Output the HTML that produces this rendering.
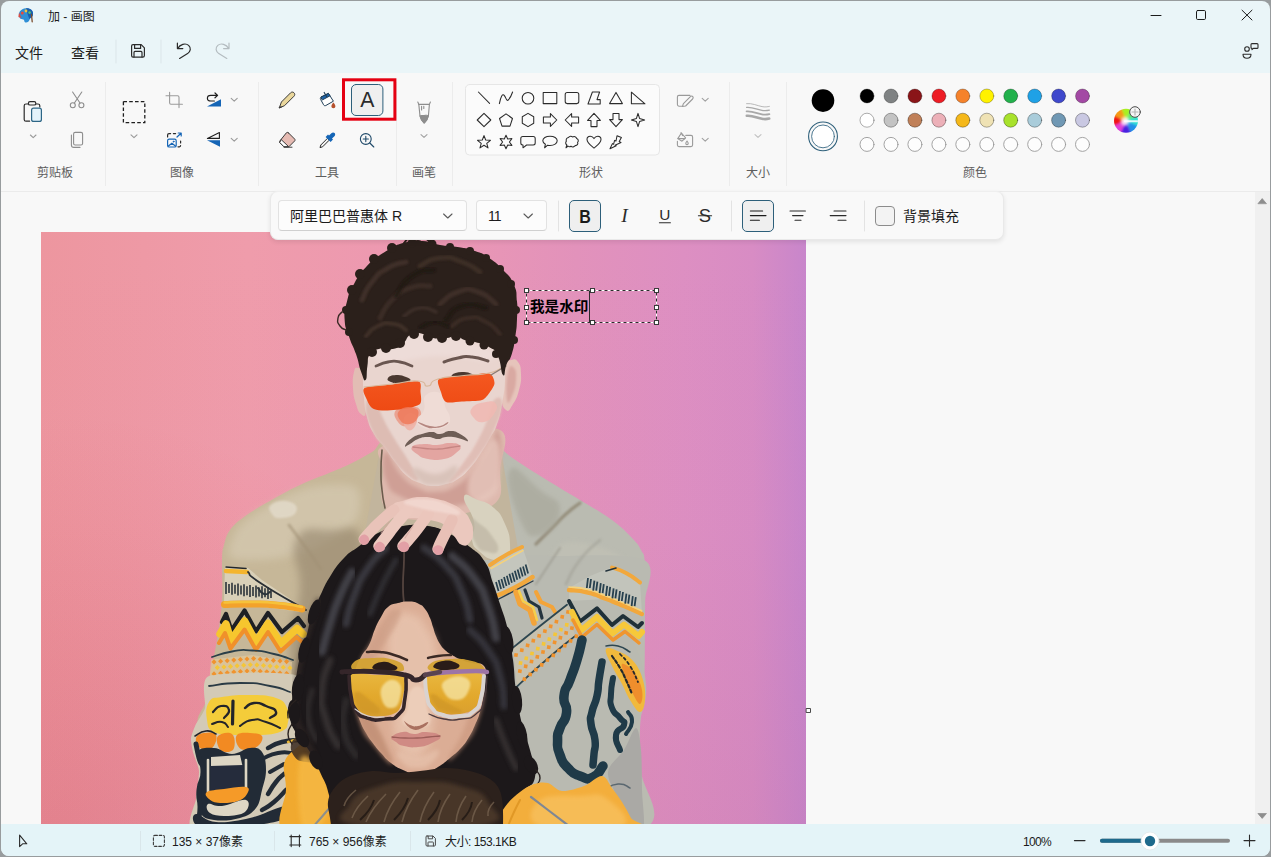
<!DOCTYPE html>
<html lang="zh-CN">
<head>
<meta charset="utf-8">
<title>加 - 画图</title>
<style>
*{box-sizing:border-box;margin:0;padding:0}
html,body{width:1271px;height:857px;overflow:hidden;background:#989c9e}
body{font-family:"Liberation Sans","Noto Sans CJK SC",sans-serif;color:#1b1b1b;position:relative}
.abs{position:absolute}
#win{position:absolute;left:1px;top:1px;width:1269px;height:855px;background:#eaf5f8;border-radius:8px;overflow:hidden}
#topstrip{display:none}
#title{position:absolute;left:48px;top:9px;font-size:12px;color:#1b1b1b;line-height:16px;white-space:nowrap}
.menu{position:absolute;top:44px;font-size:14px;line-height:18px;color:#1b1b1b;white-space:nowrap}
#ribbon{position:absolute;left:1px;top:73px;width:1269px;height:119px;background:#f8f8f8;border-bottom:1px solid #ebebeb}
.sep{position:absolute;top:82px;width:1px;height:104px;background:#ececec}
.glabel{position:absolute;top:165px;font-size:12px;line-height:16px;color:#5d5d5d;white-space:nowrap;transform:translateX(-50%)}
#canvasarea{position:absolute;left:1px;top:192px;width:1269px;height:633px;background:#f8f8f8}
#vscroll{position:absolute;left:1255px;top:192px;width:15px;height:632px;background:#f0f0f0}
#status{position:absolute;left:1px;top:824px;width:1269px;height:32px;background:#e4f4f8;border-radius:0 0 8px 8px}
.st{position:absolute;top:834px;font-size:12px;line-height:16px;color:#1b1b1b;white-space:nowrap}
.stsep{position:absolute;top:831px;width:1px;height:20px;background:#d9e6ea}
svg{position:absolute;overflow:visible}
</style>
</head>
<body>
<div id="win"></div>
<div id="topstrip"></div>

<!-- TITLE BAR -->
<div id="title">加 - 画图</div>


<!-- MENU BAR -->
<div class="menu" style="left:15px">文件</div>
<div class="menu" style="left:71px">查看</div>


<!-- RIBBON -->
<div id="ribbon"></div>
<div class="sep" style="left:105px"></div>
<div class="sep" style="left:258px"></div>
<div class="sep" style="left:396px"></div>
<div class="sep" style="left:452px"></div>
<div class="sep" style="left:729px"></div>
<div class="sep" style="left:786px"></div>
<div class="glabel" style="left:55px">剪贴板</div>
<div class="glabel" style="left:182px">图像</div>
<div class="glabel" style="left:327px">工具</div>
<div class="glabel" style="left:424px">画笔</div>
<div class="glabel" style="left:591px">形状</div>
<div class="glabel" style="left:758px">大小</div>
<div class="glabel" style="left:975px">颜色</div>
<svg id="chromeicons" style="left:0;top:0" width="1271" height="192" viewBox="0 0 1271 192" fill="none" stroke-linecap="round" stroke-linejoin="round">
<!-- app icon (palette) -->
<g>
<path d="M19.5,17.5 C17.5,13 20.5,8.6 26,8.2 C30.5,8 33.6,10.6 33,14.6 C32.6,17.4 30.2,17.6 29.6,19.4 C29,21.4 27.4,22.8 25.4,22.4 C24,22 24.6,19.8 23.4,19.4 C22,19 20.6,19.6 19.5,17.5Z" fill="#2f8fd6" stroke="none"/>
<path d="M26,8.2 C30.5,8 33.6,10.6 33,14.6 C32.6,17.4 30.2,17.6 29.6,19.4 C28,16 27,12 26,8.2Z" fill="#1c5fae" stroke="none"/>
<circle cx="22.3" cy="13" r="1.5" fill="#e9483b" stroke="none"/><circle cx="26" cy="11" r="1.4" fill="#f6c33b" stroke="none"/><circle cx="29.6" cy="12.6" r="1.3" fill="#58c36b" stroke="none"/>
<path d="M19,12.5 L18.4,17 L21.5,18 Z" fill="#e04a3f" stroke="none"/>
<path d="M31.5,14.5 L32.2,21.8" stroke="#7a4a2a" stroke-width="1.3"/>
</g>
<!-- window buttons -->
<path d="M1151,15.5 H1161" stroke="#1b1b1b" stroke-width="1"/>
<rect x="1196.5" y="10.5" width="9" height="9" rx="1.2" stroke="#1b1b1b" stroke-width="1"/>
<path d="M1242,10.2 L1252,20 M1252,10.2 L1242,20" stroke="#1b1b1b" stroke-width="1"/>
<!-- feedback icon -->
<g stroke="#2b2b2b" stroke-width="1.1">
<circle cx="1247" cy="49" r="2.3"/>
<path d="M1243,54.2 H1251 C1251,57 1249.4,58.2 1247,58.2 C1244.6,58.2 1243,57 1243,54.2Z"/>
<path d="M1252,43.6 H1257 C1257.6,43.6 1258,44 1258,44.6 V47.4 C1258,48 1257.6,48.4 1257,48.4 H1253.4 L1252,49.6 V48.4 C1251.2,48.4 1251,48 1251,47.4 V44.6 C1251,44 1251.4,43.6 1252,43.6Z" fill="#eaf5f8"/>
</g>
<!-- menu separators -->
<path d="M116,40 V63 M161,40 V63" stroke="#dbe5e9" stroke-width="1"/>
<!-- save -->
<g stroke="#2b2b2b" stroke-width="1.2">
<path d="M133,44.6 H141.2 L144.4,47.8 V55.6 C144.4,56.6 143.6,57.2 142.8,57.2 H133 C132,57.2 131.6,56.6 131.6,55.6 V46 C131.6,45.2 132,44.6 133,44.6Z"/>
<path d="M134.6,44.8 V48.4 H140.6 V44.8"/>
<path d="M134,57 V52.4 C134,51.8 134.4,51.4 135,51.4 H141 C141.6,51.4 142,51.8 142,52.4 V57"/>
</g>
<!-- undo -->
<path d="M177.4,43.2 V48.6 H182.8 M177.8,48.4 C180,44.4 185.4,42.6 188.6,45.4 C191.4,48 190.6,51.2 187.6,53.6 L179.6,58.4" stroke="#2b2b2b" stroke-width="1.2"/>
<!-- redo (disabled) -->
<path d="M229,43.2 V48.6 H223.6 M228.6,48.4 C226.4,44.4 221,42.6 217.8,45.4 C215,48 215.8,51.2 218.8,53.6 L226.8,58.4" stroke="#b4bcc0" stroke-width="1.2"/>

<!-- ===== CLIPBOARD ===== -->
<g stroke-width="1.2">
<path d="M28.4,104 H26 C24.8,104 24.2,104.6 24.2,105.8 V119.4 C24.2,120.6 24.8,121.2 26,121.2 H29.6" stroke="#2b2b2b"/>
<path d="M35.6,104 H38 C39.2,104 39.8,104.6 39.8,105.8 V107" stroke="#2b2b2b"/>
<rect x="28.4" y="101.6" width="7.4" height="3.4" rx="1.6" stroke="#2b2b2b" fill="#f8f8f8"/>
<rect x="31.6" y="108.2" width="9.8" height="13.2" rx="2" stroke="#2d6686" fill="#e4f3fb"/>
</g>
<path d="M30.4,135 L33.2,137.6 L36,135" stroke="#999999" stroke-width="1.1"/>
<!-- scissors (disabled) -->
<g stroke="#8d8d8d" stroke-width="1.1">
<path d="M72.6,92 L80,103 M81.8,92 L74.4,103"/>
<circle cx="72.8" cy="105.2" r="2.5"/><circle cx="81.4" cy="105.2" r="2.5"/>
</g>
<!-- copy (disabled) -->
<g stroke="#8d8d8d" stroke-width="1.1">
<rect x="73.6" y="132.4" width="9" height="12.6" rx="1.6"/>
<path d="M71.4,135 V145 C71.4,146.6 72.2,147.4 73.8,147.4 H80"/>
</g>

<!-- ===== IMAGE ===== -->
<rect x="123.4" y="101.6" width="21.4" height="21" stroke="#1f1f1f" stroke-width="1.3" stroke-dasharray="3.6 2.2" stroke-linecap="butt" stroke-linejoin="miter"/>
<path d="M131,134.8 L134,137.6 L137,134.8" stroke="#999999" stroke-width="1.1"/>
<!-- crop (gray) -->
<path d="M166,95.8 H177.6 C178.6,95.8 179,96.2 179,97.2 V107.6 M169.6,92.2 V102.8 C169.6,103.8 170,104.2 171,104.2 H182.4" stroke="#9a9a9a" stroke-width="1.1"/>
<!-- rotate -->
<path d="M207,106.6 H221 V99.2 Z" fill="#1565b6" stroke="none"/>
<path d="M214.4,101 H210.8 C208.6,101 207.4,99.8 207.4,98.2 C207.4,96.6 208.6,95.4 210.8,95.4 H217.4 M215,93 L217.6,95.4 L215,97.8" stroke="#1f1f1f" stroke-width="1.2"/>
<path d="M231.2,98.4 L234.2,101.2 L237.2,98.4" stroke="#999999" stroke-width="1.1"/>
<!-- resize -->
<g stroke-width="1.2">
<path d="M167.6,137 V135 C167.6,134 168.2,133.6 169,133.6 H170.6 M173.4,133.6 H175.6 M180.6,141 V143 M180.6,145.6 C180.6,146.4 180.2,146.8 179.4,146.8 H178" stroke="#2b2b2b"/>
<path d="M177,137 L181,133.2 M178.2,133 H181.2 V136" stroke="#1565b6"/>
<rect x="167.6" y="139.2" width="8.6" height="7.8" rx="1.6" stroke="#1565b6"/>
<path d="M168.4,146 L171.9,143.2 L175.4,146" stroke="#1565b6"/>
<circle cx="173.6" cy="141.6" r="0.6" fill="#1565b6" stroke="#1565b6" stroke-width="0.6"/>
</g>
<!-- flip -->
<path d="M207.4,138.4 L219.4,132.6 V138.4 Z" stroke="#1f1f1f" stroke-width="1.1"/>
<path d="M207,140.2 H220 V146.8 Z" fill="#1565b6" stroke="none"/>
<path d="M231.2,138.4 L234.2,141.2 L237.2,138.4" stroke="#999999" stroke-width="1.1"/>

<!-- ===== TOOLS ===== -->
<!-- pencil -->
<g stroke="#3a3a3a" stroke-width="1">
<path d="M279.4,107.6 L281.4,102 L290.6,92.8 C291.6,91.8 293,91.8 294,92.8 C295,93.8 295,95.2 294,96.2 L284.8,105.4 Z" fill="#ead79c"/>
<path d="M279.4,107.6 L281.2,106.9" stroke-width="1.4"/>
</g>
<!-- fill bucket -->
<g stroke-width="1">
<path d="M321.6,96.8 L328.4,93.4 L333.4,101.2 L326,105.4 C325,106 324.2,105.8 323.6,104.8 L320.6,99.4 C320,98.4 320.4,97.4 321.6,96.8Z" fill="#ffffff" stroke="#1f3e57"/>
<path d="M321.2,97 L328.4,93.4 L330,95.8 L322.6,99.8 Z" fill="#1e63a8" stroke="#1f3e57"/>
<path d="M324.2,92.4 L326.6,96.6" stroke="#1f3e57" stroke-width="1.1"/>
<path d="M333.4,102.4 C334.6,104 335.4,105 335.4,106.2 C335.4,107.4 334.6,108.2 333.4,108.2 C332.2,108.2 331.4,107.4 331.4,106.2 C331.4,105 332.2,104 333.4,102.4Z" fill="#b5502c" stroke="none"/>
</g>
<!-- red annotation box + text tool button -->
<rect x="343.5" y="79.8" width="51.4" height="39.4" stroke="#e50012" stroke-width="3" stroke-linejoin="miter"/>
<rect x="351.5" y="84.5" width="31.4" height="31" rx="4.5" fill="#efefef" stroke="#2d5f7a" stroke-width="1"/>
<text x="367.2" y="107.3" font-family="Liberation Sans, sans-serif" font-size="21.2" text-anchor="middle" fill="#2b2b2b" stroke="none">A</text>
<!-- eraser -->
<g stroke="#3a3a3a" stroke-width="1">
<path d="M288.4,132.8 L294.6,139 C295.2,139.6 295.2,140.4 294.6,141 L288.8,146.8 H284 L280,142.8 C279.4,142.2 279.4,141.4 280,140.8 L286.4,132.8 C287,132.2 287.8,132.2 288.4,132.8Z" fill="#e6bbb3"/>
<path d="M281.4,139.8 L288.6,146.6 L284,146.8 L280,142.8 Z" fill="#ffffff"/>
<path d="M284,147.2 H292"/>
</g>
<!-- eyedropper -->
<g>
<path d="M327.2,138.6 L320.8,145 L320,147.6 L322.6,146.8 L329,140.4 Z" fill="#f4f4f4" stroke="#2b2b2b" stroke-width="1"/>
<path d="M325.6,137 L328,134.6 L329,135.6 L331.4,133.2 C332.4,132.2 333.8,132.2 334.6,133 C335.4,133.8 335.4,135.2 334.4,136.2 L332,138.6 L333,139.6 L330.6,142 Z" fill="#1565b6" stroke="none"/>
</g>
<!-- magnifier -->
<g stroke="#1d4868" stroke-width="1.1">
<circle cx="365.8" cy="139" r="5.4"/>
<path d="M369.8,143 L373.8,147 M363.2,139 H368.4 M365.8,136.4 V141.6"/>
</g>
<!-- ===== BRUSH ===== -->
<g stroke="#8d8d8d" stroke-width="1.1">
<path d="M417.8,102 L418.8,104.4 H429.4 L430.4,102"/>
<path d="M418.8,104.4 L420,116 C420.6,119 422.4,121.4 424.2,123 C426,121.4 427.8,119 428.4,116 L429.4,104.4"/>
<path d="M420,116 C421.4,115 422.6,116 424.2,115.4 C425.8,114.8 427,115.6 428.4,115.4 C427.8,119 426,121.4 424.2,123 C422.4,121.4 420.6,119 420,116Z" fill="#8d8d8d"/>
<path d="M421.6,106.4 V110 M423.8,106.4 V108.4"/>
</g>
<path d="M421,134.6 L424,137.4 L427,134.6" stroke="#a0a0a0" stroke-width="1.1"/>
<rect x="465.5" y="84.5" width="194" height="70.5" rx="4" fill="#fbfbfb" stroke="#e6e6e6" stroke-width="1"/>
<g transform="translate(484,98)" stroke="#2b2b2b" stroke-width="1.05"><path d="M-5.6,-6 L5.6,5.4"/></g>
<g transform="translate(506,98)" stroke="#2b2b2b" stroke-width="1.05"><path d="M-6.6,5.6 C-5.4,-1 -3.6,-5 -1.6,-2.4 C0.2,0 0.6,4 2.6,1.6 C4.6,-0.8 5.8,-3.6 6.6,-6"/></g>
<g transform="translate(528,98)" stroke="#2b2b2b" stroke-width="1.05"><circle cx="0" cy="0.2" r="5.8"/></g>
<g transform="translate(550,98)" stroke="#2b2b2b" stroke-width="1.05"><rect x="-6.8" y="-5.6" width="13.6" height="11.2"/></g>
<g transform="translate(572,98)" stroke="#2b2b2b" stroke-width="1.05"><rect x="-6.8" y="-5.6" width="13.6" height="11.2" rx="2"/></g>
<g transform="translate(594,98)" stroke="#2b2b2b" stroke-width="1.05"><path d="M-6,6 L-1.6,-6 H5.6 L3,1.6 H6.2 V6 Z"/></g>
<g transform="translate(616,98)" stroke="#2b2b2b" stroke-width="1.05"><path d="M0,-5.6 L6.4,5.6 H-6.4 Z"/></g>
<g transform="translate(638,98)" stroke="#2b2b2b" stroke-width="1.05"><path d="M-6.6,-5.8 V5.8 H7 Z"/></g>
<g transform="translate(484,120)" stroke="#2b2b2b" stroke-width="1.05"><path d="M0,-6.6 L6.8,0 L0,6.6 L-6.8,0 Z"/></g>
<g transform="translate(506,120)" stroke="#2b2b2b" stroke-width="1.05"><polygon points="0.00,-6.80 6.47,-2.10 4.00,5.50 -4.00,5.50 -6.47,-2.10" transform="translate(0,0.6)"/></g>
<g transform="translate(528,120)" stroke="#2b2b2b" stroke-width="1.05"><polygon points="0.00,-6.60 5.72,-3.30 5.72,3.30 0.00,6.60 -5.72,3.30 -5.72,-3.30"/></g>
<g transform="translate(550,120)" stroke="#2b2b2b" stroke-width="1.05"><path d="M-6.6,-3 H0.4 V-6.4 L6.8,0 L0.4,6.4 V3 H-6.6 Z"/></g>
<g transform="translate(572,120)" stroke="#2b2b2b" stroke-width="1.05"><path d="M6.6,-3 H-0.4 V-6.4 L-6.8,0 L-0.4,6.4 V3 H6.6 Z"/></g>
<g transform="translate(594,120)" stroke="#2b2b2b" stroke-width="1.05"><path d="M-3,6.6 V0.4 H-6.4 L0,-6.6 L6.4,0.4 H3 V6.6 Z"/></g>
<g transform="translate(616,120)" stroke="#2b2b2b" stroke-width="1.05"><path d="M-3,-6.6 V-0.4 H-6.4 L0,6.6 L6.4,-0.4 H3 V-6.6 Z"/></g>
<g transform="translate(638,120)" stroke="#2b2b2b" stroke-width="1.05"><polygon points="0.00,-6.60 1.56,-1.56 6.60,0.00 1.56,1.56 0.00,6.60 -1.56,1.56 -6.60,0.00 -1.56,-1.56"/></g>
<g transform="translate(484,142)" stroke="#2b2b2b" stroke-width="1.05"><polygon points="0.00,-6.80 1.70,-2.35 6.47,-2.10 2.76,0.90 4.00,5.50 0.00,2.90 -4.00,5.50 -2.76,0.90 -6.47,-2.10 -1.70,-2.35" transform="translate(0,0.4)"/></g>
<g transform="translate(506,142)" stroke="#2b2b2b" stroke-width="1.05"><polygon points="0.00,-6.80 1.70,-2.94 5.89,-3.40 3.40,0.00 5.89,3.40 1.70,2.94 0.00,6.80 -1.70,2.94 -5.89,3.40 -3.40,0.00 -5.89,-3.40 -1.70,-2.94"/></g>
<g transform="translate(528,142)" stroke="#2b2b2b" stroke-width="1.05"><path d="M-5.2,-5.6 H5.2 C6.6,-5.6 7.2,-4.8 7.2,-3.6 V1 C7.2,2.2 6.6,3 5.2,3 H-1.4 L-5,5.8 V3 H-5.2 C-6.6,3 -7.2,2.2 -7.2,1 V-3.6 C-7.2,-4.8 -6.6,-5.6 -5.2,-5.6Z"/></g>
<g transform="translate(550,142)" stroke="#2b2b2b" stroke-width="1.05"><path d="M0,-5.8 C4.2,-5.8 7.2,-3.8 7.2,-1.2 C7.2,1.4 4.2,3.4 0,3.4 C-0.8,3.4 -1.6,3.3 -2.4,3.2 L-5.4,5.8 L-4.6,2.2 C-6.2,1.4 -7.2,0.2 -7.2,-1.2 C-7.2,-3.8 -4.2,-5.8 0,-5.8Z"/></g>
<g transform="translate(572,142)" stroke="#2b2b2b" stroke-width="1.05"><path d="M-3.4,-4.6 C-2.4,-6 -0.4,-6 0.6,-5 C2,-6 4.2,-5.4 4.6,-3.6 C6.4,-3 6.8,-0.8 5.6,0.4 C6.4,2 5,3.8 3.2,3.6 C2.4,5 0.2,5.4 -1,4.2 C-2,4.8 -3.2,4.8 -4,4 L-6,5.8 L-5.2,3 C-6.6,2 -6.6,0.2 -5.6,-0.8 C-6.4,-2.4 -5.2,-4.4 -3.4,-4.6Z"/></g>
<g transform="translate(594,142)" stroke="#2b2b2b" stroke-width="1.05"><path d="M0,6 C-3,3.6 -7,0.8 -7,-2.6 C-7,-4.6 -5.6,-5.8 -3.8,-5.8 C-2.2,-5.8 -0.8,-4.8 0,-3.4 C0.8,-4.8 2.2,-5.8 3.8,-5.8 C5.6,-5.8 7,-4.6 7,-2.6 C7,0.8 3,3.6 0,6Z"/></g>
<g transform="translate(616,142)" stroke="#2b2b2b" stroke-width="1.05"><path d="M1,-6.2 L5.4,-4.4 L3.2,-0.4 L5,0.4 L-1,3.2 L0.2,3.8 L-6,6.8 L-3.6,1.6 L-2.4,2.2 L-1.4,-1.6 L0,-1 Z"/></g>
<g stroke="#9a9a9a" stroke-width="1.1"><path d="M690,95.4 H679 C678,95.4 677.4,96 677.4,97 V104.6 C677.4,105.6 678,106.2 679,106.2 H682"/><path d="M682.4,106.4 L683.4,103.6 L690.4,96.6 C691.2,95.8 692.2,95.8 692.8,96.6 C693.4,97.4 693.4,98.2 692.6,99 L685.6,106 Z"/></g>
<path d="M702.2,98.4 L705.2,101.2 L708.2,98.4" stroke="#a0a0a0" stroke-width="1.1"/>
<g stroke="#9a9a9a" stroke-width="1.1"><path d="M685.8,135.4 H691 C692,135.4 692.6,136 692.6,137 V145 C692.6,146 692,146.6 691,146.6 H679 C678,146.6 677.4,146 677.4,145 V141.4"/><path d="M681.4,133 L685.6,137.8 L682,141.2 L677.8,138.6 Z"/><path d="M678,138.6 H685"/><path d="M681,132.8 L682.6,135.6"/><path d="M687,141 C687.8,142 688.2,142.6 688.2,143.4 C688.2,144.2 687.6,144.6 687,144.6 C686.4,144.6 685.8,144.2 685.8,143.4 C685.8,142.6 686.2,142 687,141Z"/></g>
<path d="M702.2,138.4 L705.2,141.2 L708.2,138.4" stroke="#a0a0a0" stroke-width="1.1"/>
<g stroke="#a8a8a8"><path d="M746.6,103.6 C752,103 757,105.6 762,106.6 C765,107.2 767.6,106.8 769.4,106.4" stroke-width="0.8"/><path d="M746.6,107.4 C752,106.8 757,109.4 762,110.4 C765,111 767.6,110.6 769.4,110.2" stroke-width="1.2"/><path d="M746.6,111.4 C752,110.8 757,113.4 762,114.4 C765,115 767.6,114.6 769.4,114.2" stroke-width="1.8"/><path d="M746.8,115.8 C752,115.2 757,117.8 762,118.8 C765,119.4 767.6,119 769.2,118.6" stroke-width="2.6"/></g>
<path d="M755,134.6 L758,137.4 L761,134.6" stroke="#c0c0c0" stroke-width="1.1"/>
<circle cx="823" cy="100.6" r="11.3" fill="#000000" stroke="none"/>
<circle cx="823" cy="136.4" r="14.4" fill="#f8f8f8" stroke="#2d5f7a" stroke-width="1.1"/>
<circle cx="823" cy="136.4" r="11.4" fill="#ffffff" stroke="#3a6a84" stroke-width="0.9"/>
<circle cx="867.0" cy="96" r="7" fill="#000000" stroke="#00000055" stroke-width="0.8"/>
<circle cx="891.0" cy="96" r="7" fill="#7f8283" stroke="#00000055" stroke-width="0.8"/>
<circle cx="914.9" cy="96" r="7" fill="#8a1518" stroke="#00000055" stroke-width="0.8"/>
<circle cx="938.9" cy="96" r="7" fill="#ed1c24" stroke="#00000055" stroke-width="0.8"/>
<circle cx="962.8" cy="96" r="7" fill="#f5822b" stroke="#00000055" stroke-width="0.8"/>
<circle cx="986.8" cy="96" r="7" fill="#fff200" stroke="#00000055" stroke-width="0.8"/>
<circle cx="1010.7" cy="96" r="7" fill="#22b14c" stroke="#00000055" stroke-width="0.8"/>
<circle cx="1034.7" cy="96" r="7" fill="#1fa1e6" stroke="#00000055" stroke-width="0.8"/>
<circle cx="1058.6" cy="96" r="7" fill="#3f48cc" stroke="#00000055" stroke-width="0.8"/>
<circle cx="1082.5" cy="96" r="7" fill="#a349a4" stroke="#00000055" stroke-width="0.8"/>
<circle cx="867.0" cy="120.2" r="7" fill="#ffffff" stroke="#00000066" stroke-width="0.8"/>
<circle cx="891.0" cy="120.2" r="7" fill="#c3c3c3" stroke="#00000066" stroke-width="0.8"/>
<circle cx="914.9" cy="120.2" r="7" fill="#c08058" stroke="#00000066" stroke-width="0.8"/>
<circle cx="938.9" cy="120.2" r="7" fill="#ecb0b8" stroke="#00000066" stroke-width="0.8"/>
<circle cx="962.8" cy="120.2" r="7" fill="#f5b81a" stroke="#00000066" stroke-width="0.8"/>
<circle cx="986.8" cy="120.2" r="7" fill="#efe2b4" stroke="#00000066" stroke-width="0.8"/>
<circle cx="1010.7" cy="120.2" r="7" fill="#a8e22c" stroke="#00000066" stroke-width="0.8"/>
<circle cx="1034.7" cy="120.2" r="7" fill="#a9ccda" stroke="#00000066" stroke-width="0.8"/>
<circle cx="1058.6" cy="120.2" r="7" fill="#7098b4" stroke="#00000066" stroke-width="0.8"/>
<circle cx="1082.5" cy="120.2" r="7" fill="#c9c8e2" stroke="#00000066" stroke-width="0.8"/>
<circle cx="867.0" cy="144.4" r="7" fill="#fdfdfd" stroke="#9a9a9a" stroke-width="0.9"/>
<circle cx="891.0" cy="144.4" r="7" fill="#fdfdfd" stroke="#9a9a9a" stroke-width="0.9"/>
<circle cx="914.9" cy="144.4" r="7" fill="#fdfdfd" stroke="#9a9a9a" stroke-width="0.9"/>
<circle cx="938.9" cy="144.4" r="7" fill="#fdfdfd" stroke="#9a9a9a" stroke-width="0.9"/>
<circle cx="962.8" cy="144.4" r="7" fill="#fdfdfd" stroke="#9a9a9a" stroke-width="0.9"/>
<circle cx="986.8" cy="144.4" r="7" fill="#fdfdfd" stroke="#9a9a9a" stroke-width="0.9"/>
<circle cx="1010.7" cy="144.4" r="7" fill="#fdfdfd" stroke="#9a9a9a" stroke-width="0.9"/>
<circle cx="1034.7" cy="144.4" r="7" fill="#fdfdfd" stroke="#9a9a9a" stroke-width="0.9"/>
<circle cx="1058.6" cy="144.4" r="7" fill="#fdfdfd" stroke="#9a9a9a" stroke-width="0.9"/>
<circle cx="1082.5" cy="144.4" r="7" fill="#fdfdfd" stroke="#9a9a9a" stroke-width="0.9"/>
<defs><filter id="wb" x="-50%" y="-50%" width="200%" height="200%"><feGaussianBlur stdDeviation="1.1"/></filter><filter id="wb2" x="-50%" y="-50%" width="200%" height="200%"><feGaussianBlur stdDeviation="1.8"/></filter><clipPath id="wclip"><circle cx="1126" cy="120.8" r="12"/></clipPath></defs>
<g clip-path="url(#wclip)"><g filter="url(#wb)">
<path d="M1126,120.8 L1119.67,105.13 L1133.14,105.48 Z" fill="#a8f020" stroke="none"/>
<path d="M1126,120.8 L1132.60,105.24 L1141.88,115.02 Z" fill="#58e870" stroke="none"/>
<path d="M1126,120.8 L1141.67,114.47 L1141.32,127.94 Z" fill="#30e2d2" stroke="none"/>
<path d="M1126,120.8 L1141.56,127.40 L1131.78,136.68 Z" fill="#2090e8" stroke="none"/>
<path d="M1126,120.8 L1132.33,136.47 L1118.86,136.12 Z" fill="#4a22e0" stroke="none"/>
<path d="M1126,120.8 L1119.40,136.36 L1110.12,126.58 Z" fill="#e040d8" stroke="none"/>
<path d="M1126,120.8 L1110.33,127.13 L1110.68,113.66 Z" fill="#f01818" stroke="none"/>
<path d="M1126,120.8 L1110.44,114.20 L1120.22,104.92 Z" fill="#f49a14" stroke="none"/>
</g>
<circle cx="1125" cy="121.3" r="4.2" fill="#ffffff" fill-opacity="0.85" stroke="none" filter="url(#wb2)"/>
<rect x="1124" y="120.3" width="15" height="2" rx="1" fill="#ffffff" fill-opacity="0.85" stroke="none"/>
</g>
<circle cx="1135" cy="112" r="5.3" fill="#f6f6f6" stroke="#4a4a4a" stroke-width="1"/>
<path d="M1132,112 H1138 M1135,109 V115" stroke="#b4b4b4" stroke-width="1.2"/>

</svg>


<!-- CANVAS AREA -->
<div id="canvasarea"></div>
<div id="vscroll"></div>
<svg id="photo" style="left:41px;top:232px" width="765" height="592" viewBox="41 232 765 592">
<defs>
<clipPath id="pclip"><rect x="41" y="232" width="765" height="592"/></clipPath>
<linearGradient id="bgx" gradientUnits="userSpaceOnUse" x1="41" y1="0" x2="806" y2="0">
<stop offset="0" stop-color="#ed969f"/><stop offset="0.27" stop-color="#ef9cab"/><stop offset="0.5" stop-color="#ec98b2"/>
<stop offset="0.7" stop-color="#e292bb"/><stop offset="0.84" stop-color="#dd8fc2"/><stop offset="0.93" stop-color="#d88cc4"/><stop offset="1" stop-color="#c886cb"/>
</linearGradient>
<linearGradient id="bgy" gradientUnits="userSpaceOnUse" x1="0" y1="232" x2="0" y2="824">
<stop offset="0" stop-color="#b46493" stop-opacity="0"/><stop offset="0.5" stop-color="#b46493" stop-opacity="0.02"/>
<stop offset="1" stop-color="#b46493" stop-opacity="0.14"/>
</linearGradient>
<radialGradient id="bgbl" gradientUnits="userSpaceOnUse" cx="60" cy="830" r="420">
<stop offset="0" stop-color="#d8302a" stop-opacity="0.14"/><stop offset="0.6" stop-color="#d8302a" stop-opacity="0.06"/><stop offset="1" stop-color="#d8302a" stop-opacity="0"/>
</radialGradient>
<linearGradient id="armL" gradientUnits="userSpaceOnUse" x1="200" y1="0" x2="340" y2="0">
<stop offset="0" stop-color="#cdbfa5"/><stop offset="0.5" stop-color="#c6b79c"/><stop offset="1" stop-color="#a9987e"/>
</linearGradient>
<linearGradient id="lensM" gradientUnits="userSpaceOnUse" x1="0" y1="376" x2="0" y2="410">
<stop offset="0" stop-color="#f4571f"/><stop offset="1" stop-color="#ee4a14"/>
</linearGradient>
<linearGradient id="lensG" gradientUnits="userSpaceOnUse" x1="0" y1="676" x2="0" y2="718">
<stop offset="0" stop-color="#e8b53c"/><stop offset="0.5" stop-color="#e2a82c"/><stop offset="1" stop-color="#d89e30"/>
</linearGradient>
<filter id="b1" x="-10%" y="-10%" width="120%" height="120%"><feGaussianBlur stdDeviation="1"/></filter>
<filter id="b2" x="-10%" y="-10%" width="120%" height="120%"><feGaussianBlur stdDeviation="2.2"/></filter>
<filter id="b4" x="-20%" y="-20%" width="140%" height="140%"><feGaussianBlur stdDeviation="4"/></filter>
<filter id="b8" x="-30%" y="-30%" width="160%" height="160%"><feGaussianBlur stdDeviation="8"/></filter>
</defs>
<g clip-path="url(#pclip)">
<rect x="41" y="232" width="765" height="592" fill="url(#bgx)"/>
<rect x="41" y="232" width="765" height="592" fill="url(#bgy)"/>
<rect x="41" y="232" width="765" height="592" fill="url(#bgbl)"/>
<path d="M384.0,443.0 C378.4,439.4 378.4,448.0 372.0,452.0 C365.6,456.0 359.6,459.2 352.0,463.0 C344.4,466.8 344.4,466.6 334.0,471.0 C323.6,475.4 313.2,478.8 300.0,485.0 C286.8,491.2 279.2,495.6 268.0,502.0 C256.8,508.4 251.6,511.4 244.0,517.0 C236.4,522.6 234.0,524.4 230.0,530.0 C226.0,535.6 225.6,539.0 224.0,545.0 C222.4,551.0 222.4,549.0 222.0,560.0 C221.6,571.0 223.0,584.0 222.0,600.0 C221.0,616.0 219.6,624.0 217.0,640.0 C214.4,656.0 211.2,668.0 209.0,680.0 C206.8,692.0 206.6,690.0 206.0,700.0 C205.4,710.0 187.2,722.0 206.0,730.0 C224.8,738.0 273.2,742.8 300.0,740.0 C326.8,737.2 331.0,744.0 340.0,716.0 C349.0,688.0 333.0,635.2 345.0,600.0 C357.0,564.8 389.0,566.0 400.0,540.0 C411.0,514.0 403.2,489.4 400.0,470.0 C396.8,450.6 389.6,446.6 384.0,443.0Z" fill="#c6b798" />
<path d="M497.0,443.0 C508.0,439.4 500.4,448.0 505.0,452.0 C509.6,456.0 511.0,457.0 520.0,463.0 C529.0,469.0 538.0,474.6 550.0,482.0 C562.0,489.4 567.6,492.4 580.0,500.0 C592.4,507.6 601.6,512.4 612.0,520.0 C622.4,527.6 626.2,532.0 632.0,538.0 C637.8,544.0 638.4,544.6 641.0,550.0 C643.6,555.4 644.2,551.0 645.0,565.0 C645.8,579.0 645.2,595.0 645.0,620.0 C644.8,645.0 645.0,668.0 644.0,690.0 C643.0,712.0 640.6,714.0 640.0,730.0 C639.4,746.0 640.6,750.0 641.0,770.0 C641.4,790.0 670.2,818.0 642.0,830.0 C613.8,842.0 530.4,872.0 500.0,830.0 C469.6,788.0 500.0,674.0 490.0,620.0 C480.0,566.0 458.0,590.0 450.0,560.0 C442.0,530.0 440.6,493.4 450.0,470.0 C459.4,446.6 486.0,446.6 497.0,443.0Z" fill="#babbb1" />
<path d="M536.0,544.0 C541.3,538.7 542.0,538.0 552.0,528.0 C562.0,518.0 556.7,522.3 566.0,514.0 C575.3,505.7 575.3,506.7 580.0,503.0" fill="none" stroke="#8d8470" stroke-width="3.2" stroke-linecap="round" stroke-linejoin="round" opacity="0.8" filter="url(#b1)"/>
<path d="M510.0,470.0 C515.3,462.0 526.7,479.3 540.0,490.0 C553.3,500.7 560.0,498.0 560.0,510.0 C560.0,522.0 550.7,532.3 540.0,535.0 C529.3,537.7 528.0,537.3 520.0,520.0 C512.0,502.7 504.7,478.0 510.0,470.0Z" fill="#a6a598" opacity="0.6" filter="url(#b2)"/>
<path d="M560.0,545.0 C572.0,537.0 605.6,547.0 620.0,556.0 C634.4,565.0 644.0,582.0 632.0,590.0 C620.0,598.0 574.4,605.0 560.0,596.0 C545.6,587.0 548.0,553.0 560.0,545.0Z" fill="#c3c2b6" opacity="0.6" filter="url(#b2)"/>
<path d="M380.0,450.0 L500.0,445.0 L520.0,560.0 L360.0,560.0Z" fill="#c2b59d" />
<path d="M270.0,505.0 C296.1,490.3 306.0,486.3 330.0,485.0 C354.0,483.7 360.0,485.3 360.0,500.0 C360.0,514.7 359.3,524.0 330.0,540.0 C300.7,556.0 276.1,560.0 250.0,560.0 C223.9,560.0 226.7,554.7 232.0,540.0 C237.3,525.3 243.9,519.7 270.0,505.0Z" fill="#d6cab2" opacity="0.7" filter="url(#b4)"/>
<path d="M296.0,540.0 C304.0,524.0 312.4,530.0 330.0,530.0 C347.6,530.0 356.7,521.3 362.0,540.0 C367.3,558.7 358.5,568.0 350.0,600.0 C341.5,632.0 343.3,633.3 330.0,660.0 C316.7,686.7 310.7,705.3 300.0,700.0 C289.3,694.7 290.0,669.3 290.0,640.0 C290.0,610.7 298.4,616.7 300.0,590.0 C301.6,563.3 288.0,556.0 296.0,540.0Z" fill="#93836a" opacity="0.6" filter="url(#b4)"/>
<path d="M289.0,525.0 C294.0,531.7 293.3,530.3 304.0,545.0 C314.7,559.7 315.3,561.0 321.0,569.0" fill="none" stroke="#a19176" stroke-width="3" stroke-linecap="round" stroke-linejoin="round" opacity="0.6" filter="url(#b1)"/>
<path d="M272.0,504.0 C276.8,500.8 283.6,499.9 290.0,502.0 C296.4,504.1 298.1,507.7 296.0,512.0 C293.9,516.3 288.4,517.5 282.0,518.0 C275.6,518.5 274.7,517.7 272.0,514.0 C269.3,510.3 267.2,507.2 272.0,504.0Z" fill="#e6dfd0" opacity="0.7" filter="url(#b1)"/>
<path d="M383.0,446.0 C371.6,452.0 382.6,457.6 383.0,470.0 C383.4,482.4 377.6,498.0 385.0,508.0 C392.4,518.0 403.0,519.2 420.0,520.0 C437.0,520.8 454.4,516.0 470.0,512.0 C485.6,508.0 492.0,508.4 498.0,500.0 C504.0,491.6 499.6,484.0 500.0,470.0 C500.4,456.0 512.0,436.0 500.0,430.0 C488.0,424.0 463.4,436.8 440.0,440.0 C416.6,443.2 394.4,440.0 383.0,446.0Z" fill="#deb9ae" />
<path d="M386.0,452.0 C389.7,450.4 391.5,464.4 400.0,474.0 C408.5,483.6 408.4,483.2 418.0,488.0 C427.6,492.8 425.9,492.5 436.0,492.0 C446.1,491.5 445.9,491.9 456.0,486.0 C466.1,480.1 464.9,480.1 474.0,470.0 C483.1,459.9 483.6,458.7 490.0,448.0 C496.4,437.3 495.6,424.1 498.0,430.0 C500.4,435.9 503.8,452.4 499.0,470.0 C494.2,487.6 495.7,486.4 480.0,496.0 C464.3,505.6 460.3,505.5 440.0,506.0 C419.7,506.5 418.4,504.9 404.0,498.0 C389.6,491.1 390.8,492.3 386.0,480.0 C381.2,467.7 382.3,453.6 386.0,452.0Z" fill="#cf9f95" filter="url(#b2)"/>
<path d="M478.0,462.0 C485.5,450.3 490.4,435.2 496.0,440.0 C501.6,444.8 500.6,464.5 499.0,480.0 C497.4,495.5 496.7,492.7 490.0,498.0 C483.3,503.3 479.9,503.7 474.0,500.0 C468.1,496.3 466.9,494.1 468.0,484.0 C469.1,473.9 470.5,473.7 478.0,462.0Z" fill="#e6c6bc" opacity="0.8" filter="url(#b2)"/>
<path d="M354.0,372.0 C355.3,366.7 355.3,368.0 358.0,368.0 C360.7,368.0 362.1,365.6 364.0,372.0 C365.9,378.4 364.5,381.3 365.0,392.0 C365.5,402.7 367.1,406.1 366.0,412.0 C364.9,417.9 363.7,416.1 361.0,414.0 C358.3,411.9 358.1,410.9 356.0,404.0 C353.9,397.1 353.5,396.5 353.0,388.0 C352.5,379.5 352.7,377.3 354.0,372.0Z" fill="#e2bdb4" />
<path d="M503.0,366.0 C505.7,356.9 507.0,361.1 511.0,360.0 C515.0,358.9 515.3,358.3 518.0,362.0 C520.7,365.7 520.7,366.5 521.0,374.0 C521.3,381.5 521.1,382.0 519.0,390.0 C516.9,398.0 516.5,398.7 513.0,404.0 C509.5,409.3 509.2,412.7 506.0,410.0 C502.8,407.3 501.8,405.7 501.0,394.0 C500.2,382.3 500.3,375.1 503.0,366.0Z" fill="#e6c4bb" />
<path d="M508.0,372.0 C509.9,363.5 511.9,365.9 514.0,368.0 C516.1,370.1 516.5,372.5 516.0,380.0 C515.5,387.5 514.4,390.7 512.0,396.0 C509.6,401.3 508.1,406.4 507.0,400.0 C505.9,393.6 506.1,380.5 508.0,372.0Z" fill="#d9a9a2" filter="url(#b1)"/>
<path d="M364.0,352.0 C355.5,364.3 363.0,363.7 363.0,376.0 C363.0,388.3 362.9,387.1 364.0,398.0 C365.1,408.9 364.3,407.4 367.0,417.0 C369.7,426.6 369.2,425.7 374.0,434.0 C378.8,442.3 379.4,440.5 385.0,448.0 C390.6,455.5 389.1,454.5 395.0,462.0 C400.9,469.5 400.3,470.4 407.0,476.0 C413.7,481.6 413.1,480.3 420.0,483.0 C426.9,485.7 426.1,485.7 433.0,486.0 C439.9,486.3 439.3,485.9 446.0,484.0 C452.7,482.1 451.6,483.3 458.0,479.0 C464.4,474.7 463.9,474.9 470.0,468.0 C476.1,461.1 475.7,461.0 481.0,453.0 C486.3,445.0 485.7,445.7 490.0,438.0 C494.3,430.3 493.8,433.1 497.0,424.0 C500.2,414.9 499.9,415.7 502.0,404.0 C504.1,392.3 504.5,391.7 505.0,380.0 C505.5,368.3 505.3,369.3 504.0,360.0 C502.7,350.7 509.1,353.0 500.0,345.0 C490.9,337.0 488.7,336.1 470.0,330.0 C451.3,323.9 450.0,322.0 430.0,322.0 C410.0,322.0 412.6,322.0 395.0,330.0 C377.4,338.0 372.5,339.7 364.0,352.0Z" fill="#e9d5cf" />
<path d="M366.0,404.0 C364.9,412.0 366.7,417.7 372.0,430.0 C377.3,442.3 378.0,439.3 386.0,450.0 C394.0,460.7 393.5,462.0 402.0,470.0 C410.5,478.0 416.4,482.7 418.0,480.0 C419.6,477.3 414.4,471.2 408.0,460.0 C401.6,448.8 400.9,449.7 394.0,438.0 C387.1,426.3 386.8,426.1 382.0,416.0 C377.2,405.9 380.3,403.2 376.0,400.0 C371.7,396.8 367.1,396.0 366.0,404.0Z" fill="#dcbab1" opacity="0.9" filter="url(#b1)"/>
<path d="M502.0,404.0 C502.0,412.0 499.9,416.7 494.0,430.0 C488.1,443.3 488.5,442.3 480.0,454.0 C471.5,465.7 470.5,466.5 462.0,474.0 C453.5,481.5 447.5,485.2 448.0,482.0 C448.5,478.8 456.0,473.2 464.0,462.0 C472.0,450.8 471.6,451.7 478.0,440.0 C484.4,428.3 483.7,428.7 488.0,418.0 C492.3,407.3 490.3,403.7 494.0,400.0 C497.7,396.3 502.0,396.0 502.0,404.0Z" fill="#e0bcb4" opacity="0.9" filter="url(#b1)"/>
<path d="M396.0,410.0 C399.2,406.0 403.6,407.0 410.0,407.0 C416.4,407.0 417.9,406.5 420.0,410.0 C422.1,413.5 421.2,415.7 418.0,420.0 C414.8,424.3 413.3,425.5 408.0,426.0 C402.7,426.5 401.2,426.3 398.0,422.0 C394.8,417.7 392.8,414.0 396.0,410.0Z" fill="#ea9c8a" opacity="0.9"/>
<path d="M404.0,418.0 C405.6,413.7 410.8,412.4 414.0,414.0 C417.2,415.6 417.6,419.7 416.0,424.0 C414.4,428.3 411.2,431.6 408.0,430.0 C404.8,428.4 402.4,422.3 404.0,418.0Z" fill="#eeb3a6" opacity="0.9"/>
<path d="M472.0,408.0 C475.2,403.7 479.6,403.1 486.0,402.0 C492.4,400.9 493.9,400.8 496.0,404.0 C498.1,407.2 497.2,409.2 494.0,414.0 C490.8,418.8 489.3,420.9 484.0,422.0 C478.7,423.1 477.2,421.7 474.0,418.0 C470.8,414.3 468.8,412.3 472.0,408.0Z" fill="#efb9b3" opacity="0.9"/>
<path d="M380.0,345.0 C392.0,337.8 403.3,335.0 430.0,335.0 C456.7,335.0 464.0,338.3 480.0,345.0 C496.0,351.7 500.7,357.1 490.0,360.0 C479.3,362.9 468.0,355.5 440.0,356.0 C412.0,356.5 401.0,364.9 385.0,362.0 C369.0,359.1 368.0,352.2 380.0,345.0Z" fill="#eddcd8" filter="url(#b2)"/>
<path d="M426.0,395.0 C421.2,399.3 426.4,403.3 424.0,410.0 C421.6,416.7 417.5,415.5 417.0,420.0 C416.5,424.5 417.5,424.6 422.0,427.0 C426.5,429.4 427.6,429.3 434.0,429.0 C440.4,428.7 441.7,428.9 446.0,426.0 C450.3,423.1 450.3,423.3 450.0,418.0 C449.7,412.7 447.1,412.4 445.0,406.0 C442.9,399.6 447.1,396.9 442.0,394.0 C436.9,391.1 430.8,390.7 426.0,395.0Z" fill="#efdcd6" />
<path d="M418.0,422.0 C416.9,422.3 421.7,425.4 426.0,427.0 C430.3,428.6 429.2,428.3 434.0,428.0 C438.8,427.7 440.3,427.6 444.0,426.0 C447.7,424.4 449.1,422.0 448.0,422.0 C446.9,422.0 444.8,424.9 440.0,426.0 C435.2,427.1 435.9,427.1 430.0,426.0 C424.1,424.9 419.1,421.7 418.0,422.0Z" fill="#b58780" />
<path d="M376.0,366.0 C380.0,364.7 380.0,363.3 388.0,362.0 C396.0,360.7 392.0,360.7 400.0,362.0 C408.0,363.3 408.0,364.7 412.0,366.0" fill="none" stroke="#6a5650" stroke-width="2.8" stroke-linecap="round" stroke-linejoin="round" />
<path d="M444.0,362.0 C448.7,360.7 448.7,359.7 458.0,358.0 C467.3,356.3 462.0,356.0 472.0,357.0 C482.0,358.0 482.7,359.7 488.0,361.0" fill="none" stroke="#6a5650" stroke-width="3" stroke-linecap="round" stroke-linejoin="round" />
<path d="M388.0,378.0 C389.3,376.1 391.2,375.3 396.0,375.0 C400.8,374.7 402.3,375.4 406.0,377.0 C409.7,378.6 411.6,379.4 410.0,381.0 C408.4,382.6 405.1,382.7 400.0,383.0 C394.9,383.3 394.2,383.3 391.0,382.0 C387.8,380.7 386.7,379.9 388.0,378.0Z" fill="#4a3830" />
<path d="M452.0,375.0 C453.6,373.1 456.7,372.3 462.0,372.0 C467.3,371.7 468.3,372.4 472.0,374.0 C475.7,375.6 477.6,376.4 476.0,378.0 C474.4,379.6 471.3,379.7 466.0,380.0 C460.7,380.3 459.7,380.3 456.0,379.0 C452.3,377.7 450.4,376.9 452.0,375.0Z" fill="#4a3830" />
<path d="M405.0,446.0 C405.5,444.4 407.5,441.2 412.0,438.0 C416.5,434.8 416.7,435.6 422.0,434.0 C427.3,432.4 427.2,432.0 432.0,432.0 C436.8,432.0 435.2,434.3 440.0,434.0 C444.8,433.7 444.7,431.0 450.0,431.0 C455.3,431.0 455.2,431.3 460.0,434.0 C464.8,436.7 468.5,439.9 468.0,441.0 C467.5,442.1 463.9,439.1 458.0,438.0 C452.1,436.9 451.3,436.7 446.0,437.0 C440.7,437.3 442.8,439.0 438.0,439.0 C433.2,439.0 433.3,437.0 428.0,437.0 C422.7,437.0 422.8,437.1 418.0,439.0 C413.2,440.9 413.5,442.1 410.0,444.0 C406.5,445.9 404.5,447.6 405.0,446.0Z" fill="#6e5d55" />
<path d="M412.0,447.0 C413.9,444.3 417.3,444.5 424.0,444.0 C430.7,443.5 430.1,445.3 437.0,445.0 C443.9,444.7 443.9,442.7 450.0,443.0 C456.1,443.3 458.4,443.3 460.0,446.0 C461.6,448.7 460.3,449.5 456.0,453.0 C451.7,456.5 451.5,457.4 444.0,459.0 C436.5,460.6 435.2,460.3 428.0,459.0 C420.8,457.7 421.3,457.2 417.0,454.0 C412.7,450.8 410.1,449.7 412.0,447.0Z" fill="#e3a5a1" />
<path d="M413.0,447.0 C417.0,447.5 416.7,447.8 425.0,448.5 C433.3,449.2 429.7,449.3 438.0,449.0 C446.3,448.7 442.7,448.5 450.0,447.5 C457.3,446.5 456.7,446.5 460.0,446.0" fill="none" stroke="#c58582" stroke-width="1.3" stroke-linecap="round" stroke-linejoin="round" />
<path d="M414.0,468.0 C418.3,466.1 424.8,474.5 436.0,474.0 C447.2,473.5 452.3,464.1 456.0,466.0 C459.7,467.9 455.9,475.9 450.0,481.0 C444.1,486.1 442.0,485.0 434.0,485.0 C426.0,485.0 425.3,485.5 420.0,481.0 C414.7,476.5 409.7,469.9 414.0,468.0Z" fill="#d9c3ba" filter="url(#b2)"/>
<path d="M364.5,388.0 C367.8,385.9 384.8,385.4 392.0,384.5 C399.2,383.6 414.7,380.5 418.5,381.5 C422.3,382.5 420.3,389.0 420.5,392.0 C420.7,395.0 422.2,401.7 420.0,404.0 C417.8,406.3 409.1,408.1 404.0,409.0 C398.9,409.9 386.3,410.6 382.0,410.5 C377.7,410.4 374.0,409.4 372.0,408.0 C370.0,406.6 368.0,402.7 367.0,400.0 C366.0,397.3 361.2,390.1 364.5,388.0Z" fill="url(#lensM)" />
<path d="M439.0,379.0 C442.1,376.9 457.3,376.7 464.0,376.0 C470.7,375.3 484.9,372.6 489.0,373.5 C493.1,374.4 494.4,380.5 494.5,383.0 C494.6,385.5 491.7,389.7 490.0,392.0 C488.3,394.3 485.7,398.7 482.0,400.0 C478.3,401.3 466.8,401.2 462.0,401.5 C457.2,401.8 448.8,403.3 446.0,402.0 C443.2,400.7 441.9,395.1 441.0,392.0 C440.1,388.9 435.9,381.1 439.0,379.0Z" fill="url(#lensM)" />
<path d="M400.0,410.0 C403.7,406.8 409.2,406.4 414.0,408.0 C418.8,409.6 419.1,411.7 418.0,416.0 C416.9,420.3 414.8,422.9 410.0,424.0 C405.2,425.1 402.7,423.7 400.0,420.0 C397.3,416.3 396.3,413.2 400.0,410.0Z" fill="#ef7a5a" opacity="0.85"/>
<path d="M364.0,387.0 C373.3,386.0 374.0,386.0 392.0,384.0 C410.0,382.0 406.0,380.3 418.0,381.0 C430.0,381.7 421.3,386.7 428.0,386.0 C434.7,385.3 426.0,382.5 438.0,379.0 C450.0,375.5 447.0,377.5 464.0,375.5 C481.0,373.5 475.7,376.2 489.0,373.0 C502.3,369.8 499.0,368.3 504.0,366.0" fill="none" stroke="#d8b79a" stroke-width="1.2" stroke-linecap="round" stroke-linejoin="round" />
<path d="M491.0,375.0 L506.0,366.0" fill="none" stroke="#8a7a72" stroke-width="1.4" stroke-linecap="round" stroke-linejoin="round" />
<path d="M344.6,319.0 C344.0,308.5 344.2,312.0 347.0,301.5 C349.8,291.0 348.1,294.5 354.0,284.0 C359.9,273.5 357.5,275.9 366.5,266.5 C375.5,257.1 372.4,259.7 384.0,252.5 C395.6,245.3 393.4,245.9 405.0,242.5 C416.6,239.1 412.0,240.2 422.5,241.0 C433.0,241.8 429.5,243.2 440.0,245.0 C450.5,246.8 447.0,245.2 457.5,247.0 C468.0,248.8 465.6,247.7 475.0,251.0 C484.4,254.3 480.6,252.3 489.0,258.0 C497.4,263.7 495.6,262.2 503.0,270.0 C510.4,277.8 509.3,274.6 513.5,284.0 C517.7,293.4 516.0,291.0 517.0,301.5 C518.0,312.0 517.5,308.5 517.0,319.0 C516.5,329.5 516.9,326.0 515.3,336.5 C513.7,347.0 514.4,345.6 511.8,354.0 C509.2,362.4 509.1,358.2 506.5,364.5 C503.9,370.8 505.6,377.6 503.0,375.0 C500.4,372.4 502.0,364.4 497.8,356.0 C493.6,347.6 495.8,351.2 489.0,347.0 C482.2,342.8 482.4,344.1 475.0,342.0 C467.6,339.9 470.3,342.1 464.5,340.0 C458.7,337.9 461.1,335.6 455.8,335.0 C450.6,334.4 453.8,337.1 447.0,338.0 C440.2,338.9 441.4,339.5 433.0,338.0 C424.6,336.5 425.9,333.9 419.0,333.0 C412.1,332.1 414.8,331.9 410.0,335.0 C405.2,338.1 408.2,339.3 403.0,343.5 C397.8,347.7 400.1,347.4 392.8,349.0 C385.5,350.6 385.6,347.5 378.8,349.0 C372.0,350.5 373.4,348.9 370.0,354.0 C366.6,359.1 368.7,358.2 367.4,366.0 C366.1,373.8 367.5,378.4 365.6,380.0 C363.7,381.6 363.9,379.3 361.0,371.5 C358.1,363.7 359.6,364.5 356.0,354.0 C352.4,343.5 352.4,347.0 349.0,336.5 C345.6,326.0 345.2,329.5 344.6,319.0Z" fill="#2b201b" />
<circle cx="352" cy="290" r="5" fill="#2b201b"/>
<circle cx="360" cy="274" r="5" fill="#2b201b"/>
<circle cx="374" cy="259" r="5" fill="#2b201b"/>
<circle cx="392" cy="248" r="5" fill="#2b201b"/>
<circle cx="412" cy="243" r="4.5" fill="#2b201b"/>
<circle cx="432" cy="244" r="4.5" fill="#2b201b"/>
<circle cx="450" cy="247" r="4" fill="#2b201b"/>
<circle cx="470" cy="251" r="4" fill="#2b201b"/>
<circle cx="486" cy="258" r="4" fill="#2b201b"/>
<circle cx="500" cy="269" r="4" fill="#2b201b"/>
<circle cx="511" cy="284" r="4" fill="#2b201b"/>
<circle cx="346" cy="310" r="4" fill="#2b201b"/>
<circle cx="516" cy="310" r="4" fill="#2b201b"/>
<circle cx="514" cy="340" r="4" fill="#2b201b"/>
<circle cx="349" cy="332" r="4" fill="#2b201b"/>
<circle cx="372" cy="352" r="5" fill="#2b201b"/>
<circle cx="386" cy="348" r="5" fill="#2b201b"/>
<circle cx="400" cy="343" r="5" fill="#2b201b"/>
<circle cx="414" cy="334" r="5" fill="#2b201b"/>
<circle cx="428" cy="337" r="5" fill="#2b201b"/>
<circle cx="442" cy="338" r="5" fill="#2b201b"/>
<circle cx="456" cy="336" r="5" fill="#2b201b"/>
<circle cx="470" cy="341" r="4.5" fill="#2b201b"/>
<circle cx="484" cy="345" r="4.5" fill="#2b201b"/>
<circle cx="496" cy="354" r="4" fill="#2b201b"/>
<path d="M362.0,300.0 C365.3,294.0 363.3,292.7 372.0,282.0 C380.7,271.3 376.7,274.7 388.0,268.0 C399.3,261.3 400.0,264.0 406.0,262.0" fill="none" stroke="#46352d" stroke-width="5" stroke-linecap="round" stroke-linejoin="round" opacity="0.75" filter="url(#b1)"/>
<path d="M380.0,318.0 C384.0,312.0 382.0,310.0 392.0,300.0 C402.0,290.0 397.3,292.7 410.0,288.0 C422.7,283.3 423.3,286.7 430.0,286.0" fill="none" stroke="#43332b" stroke-width="5" stroke-linecap="round" stroke-linejoin="round" opacity="0.7" filter="url(#b1)"/>
<path d="M420.0,266.0 C426.7,263.3 426.0,259.3 440.0,258.0 C454.0,256.7 448.7,257.3 462.0,262.0 C475.3,266.7 474.0,268.7 480.0,272.0" fill="none" stroke="#45342c" stroke-width="5" stroke-linecap="round" stroke-linejoin="round" opacity="0.7" filter="url(#b1)"/>
<path d="M440.0,304.0 C446.0,300.0 445.3,296.0 458.0,292.0 C470.7,288.0 465.3,288.0 478.0,292.0 C490.7,296.0 490.0,300.0 496.0,304.0" fill="none" stroke="#46352d" stroke-width="5" stroke-linecap="round" stroke-linejoin="round" opacity="0.7" filter="url(#b1)"/>
<path d="M366.0,336.0 C370.0,332.7 368.7,330.0 378.0,326.0 C387.3,322.0 384.7,322.7 394.0,324.0 C403.3,325.3 402.0,328.0 406.0,330.0" fill="none" stroke="#48372f" stroke-width="4" stroke-linecap="round" stroke-linejoin="round" opacity="0.7" filter="url(#b1)"/>
<path d="M452.0,326.0 C457.3,323.3 456.7,319.3 468.0,318.0 C479.3,316.7 475.3,316.7 486.0,322.0 C496.7,327.3 495.3,330.0 500.0,334.0" fill="none" stroke="#43332b" stroke-width="4" stroke-linecap="round" stroke-linejoin="round" opacity="0.7" filter="url(#b1)"/>
<path d="M404.0,316.0 C409.3,313.3 409.3,309.3 420.0,308.0 C430.7,306.7 430.7,310.7 436.0,312.0" fill="none" stroke="#4a3931" stroke-width="3.5" stroke-linecap="round" stroke-linejoin="round" opacity="0.6" filter="url(#b1)"/>
<path d="M396.0,296.0 C401.3,289.3 399.3,284.7 412.0,276.0 C424.7,267.3 426.7,272.0 434.0,270.0" fill="none" stroke="#1c1411" stroke-width="4" stroke-linecap="round" stroke-linejoin="round" opacity="0.7" filter="url(#b1)"/>
<path d="M446.0,320.0 C451.3,315.3 448.7,310.0 462.0,306.0 C475.3,302.0 478.0,307.3 486.0,308.0" fill="none" stroke="#1c1411" stroke-width="4" stroke-linecap="round" stroke-linejoin="round" opacity="0.7" filter="url(#b1)"/>
<path d="M420.0,328.0 C424.7,326.0 424.7,322.7 434.0,322.0 C443.3,321.3 443.3,324.7 448.0,326.0" fill="none" stroke="#1c1411" stroke-width="3.5" stroke-linecap="round" stroke-linejoin="round" opacity="0.7" filter="url(#b1)"/>
<path d="M342.0,312.0 C340.7,314.0 338.7,313.3 338.0,318.0 C337.3,322.7 337.3,322.0 340.0,326.0 C342.7,330.0 344.0,328.7 346.0,330.0" fill="none" stroke="#3a2a25" stroke-width="1.4" stroke-linecap="round" stroke-linejoin="round" />
<path d="M404.0,243.0 C406.0,241.3 405.3,239.0 410.0,238.0 C414.7,237.0 413.3,240.0 418.0,240.0 C422.7,240.0 420.0,237.3 424.0,238.0 C428.0,238.7 428.0,240.7 430.0,242.0" fill="none" stroke="#2b201b" stroke-width="2" stroke-linecap="round" stroke-linejoin="round" />
<path d="M464.0,497.0 C465.1,491.1 470.0,497.1 478.0,500.0 C486.0,502.9 486.8,501.6 494.0,508.0 C501.2,514.4 500.7,514.4 505.0,524.0 C509.3,533.6 509.7,534.9 510.0,544.0 C510.3,553.1 510.3,553.7 506.0,558.0 C501.7,562.3 500.9,561.6 494.0,560.0 C487.1,558.4 485.9,557.3 480.0,552.0 C474.1,546.7 473.6,548.0 472.0,540.0 C470.4,532.0 476.1,533.5 474.0,522.0 C471.9,510.5 462.9,502.9 464.0,497.0Z" fill="#d8d2bf" />
<path d="M470.0,520.0 C471.1,514.7 474.1,519.7 480.0,524.0 C485.9,528.3 487.2,529.1 492.0,536.0 C496.8,542.9 499.1,545.7 498.0,550.0 C496.9,554.3 493.9,553.6 488.0,552.0 C482.1,550.4 480.8,552.5 476.0,544.0 C471.2,535.5 468.9,525.3 470.0,520.0Z" fill="#bdb5a3" opacity="0.7" filter="url(#b1)"/>
<path d="M382.0,450.0 C381.7,456.7 381.0,456.7 381.0,470.0 C381.0,483.3 380.7,477.3 382.0,490.0 C383.3,502.7 384.0,502.0 385.0,508.0" fill="none" stroke="#6b5c4c" stroke-width="1.6" stroke-linecap="round" stroke-linejoin="round" />
<path d="M225.0,566.0 L248.0,568.0 L262.0,580.0 L305.0,609.0 L302.0,612.0 L224.0,602.0Z" fill="#d9d0b8" />
<path d="M226.0,567.0 L246.0,568.5" fill="none" stroke="#23262a" stroke-width="1.6" stroke-linecap="round" stroke-linejoin="round" />
<path d="M226.0,571.0 L247.0,572.0" fill="none" stroke="#f4b52e" stroke-width="4.5" stroke-linecap="round" stroke-linejoin="round" />
<path d="M248.0,572.0 C252.7,576.0 242.7,571.3 262.0,584.0 C281.3,596.7 291.3,601.3 306.0,610.0" fill="none" stroke="#2a2f34" stroke-width="1.8" stroke-linecap="round" stroke-linejoin="round" />
<path d="M226,582.0 v12 M229,584.0 v9" stroke="#2b333a" stroke-width="1.6" fill="none"/>
<path d="M232,582.7 v12 M235,584.7 v9" stroke="#2b333a" stroke-width="1.6" fill="none"/>
<path d="M238,583.4 v12 M241,585.4 v9" stroke="#2b333a" stroke-width="1.6" fill="none"/>
<path d="M244,584.2 v12 M247,586.2 v9" stroke="#2b333a" stroke-width="1.6" fill="none"/>
<path d="M250,584.9 v12 M253,586.9 v9" stroke="#2b333a" stroke-width="1.6" fill="none"/>
<path d="M256,585.6 v12 M259,587.6 v9" stroke="#2b333a" stroke-width="1.6" fill="none"/>
<path d="M262,586.3 v12 M265,588.3 v9" stroke="#2b333a" stroke-width="1.6" fill="none"/>
<path d="M268,587.0 v12 M271,589.0 v9" stroke="#2b333a" stroke-width="1.6" fill="none"/>
<path d="M258.0,588.0 C260.0,590.0 260.0,592.7 264.0,594.0 C268.0,595.3 268.0,592.7 270.0,592.0" fill="none" stroke="#2b333a" stroke-width="2" stroke-linecap="round" stroke-linejoin="round" />
<path d="M224.5,604.5 C233.0,604.3 231.5,603.7 250.0,604.0 C268.5,604.3 262.7,603.8 280.0,605.5 C297.3,607.2 294.7,607.8 302.0,609.0" fill="none" stroke="#f3a22b" stroke-width="7" stroke-linecap="round" stroke-linejoin="round" />
<path d="M224.5,602.5 C233.0,602.3 231.5,601.7 250.0,602.0 C268.5,602.3 262.7,601.8 280.0,603.5 C297.3,605.2 294.7,605.8 302.0,607.0" fill="none" stroke="#f6c23a" stroke-width="2.5" stroke-linecap="round" stroke-linejoin="round" />
<path d="M222.0,622.0 L226.0,614.0 L231.5,630.5 L244.6,610.4 L256.0,631.4 L268.0,613.0 L282.0,632.0 L298.0,618.0 L304.0,626.0" fill="none" stroke="#1e2024" stroke-width="4.2" stroke-linecap="round" stroke-linejoin="round" />
<path d="M220.0,634.0 L226.0,624.0 L231.0,640.5 L244.6,621.0 L256.0,642.0 L268.0,623.5 L281.0,643.5 L297.0,628.5 L303.0,634.0" fill="none" stroke="#f6c62e" stroke-width="7.5" stroke-linecap="round" stroke-linejoin="round" />
<path d="M219.0,643.0 L225.0,633.0 L230.5,648.5 L244.6,629.5 L256.0,650.0 L268.0,632.0 L280.5,651.5 L296.5,637.0 L302.0,642.0" fill="none" stroke="#f0902a" stroke-width="4" stroke-linecap="round" stroke-linejoin="round" />
<path d="M212.0,657.0 C218.7,655.2 218.5,653.7 232.0,651.5 C245.5,649.3 238.5,649.7 252.5,650.5 C266.5,651.3 260.5,650.8 274.0,654.0 C287.5,657.2 286.7,658.0 293.0,660.0" fill="none" stroke="#2a3e48" stroke-width="1.8" stroke-linecap="round" stroke-linejoin="round" />
<path d="M211.0,659.5 L252.0,655.0 L292.0,662.0 L291.0,680.0 L252.0,675.0 L209.5,680.0Z" fill="#e2c79a" opacity="0.7"/>
<rect x="212.2" y="660.1" width="3.6" height="3.6" fill="#f0932e" transform="rotate(45 214.0 661.9)"/>
<rect x="218.8" y="659.5" width="3.6" height="3.6" fill="#f0932e" transform="rotate(45 220.6 661.3)"/>
<rect x="225.4" y="658.9" width="3.6" height="3.6" fill="#f0932e" transform="rotate(45 227.2 660.7)"/>
<rect x="232.0" y="658.3" width="3.6" height="3.6" fill="#f0932e" transform="rotate(45 233.8 660.1)"/>
<rect x="238.6" y="657.7" width="3.6" height="3.6" fill="#f0932e" transform="rotate(45 240.4 659.5)"/>
<rect x="245.2" y="657.2" width="3.6" height="3.6" fill="#f0932e" transform="rotate(45 247.0 659.0)"/>
<rect x="251.8" y="656.8" width="3.6" height="3.6" fill="#f0932e" transform="rotate(45 253.6 658.6)"/>
<rect x="258.4" y="657.4" width="3.6" height="3.6" fill="#f0932e" transform="rotate(45 260.2 659.2)"/>
<rect x="265.0" y="658.0" width="3.6" height="3.6" fill="#f0932e" transform="rotate(45 266.8 659.8)"/>
<rect x="271.6" y="658.6" width="3.6" height="3.6" fill="#f0932e" transform="rotate(45 273.4 660.4)"/>
<rect x="278.2" y="659.2" width="3.6" height="3.6" fill="#f0932e" transform="rotate(45 280.0 661.0)"/>
<rect x="284.8" y="659.8" width="3.6" height="3.6" fill="#f0932e" transform="rotate(45 286.6 661.6)"/>
<rect x="215.5" y="665.8" width="3.6" height="3.6" fill="#f4c638" transform="rotate(45 217.3 667.6)"/>
<rect x="222.1" y="665.2" width="3.6" height="3.6" fill="#f4c638" transform="rotate(45 223.9 667.0)"/>
<rect x="228.7" y="664.6" width="3.6" height="3.6" fill="#f4c638" transform="rotate(45 230.5 666.4)"/>
<rect x="235.3" y="664.0" width="3.6" height="3.6" fill="#f4c638" transform="rotate(45 237.1 665.8)"/>
<rect x="241.9" y="663.4" width="3.6" height="3.6" fill="#f4c638" transform="rotate(45 243.7 665.2)"/>
<rect x="248.5" y="662.9" width="3.6" height="3.6" fill="#f4c638" transform="rotate(45 250.3 664.7)"/>
<rect x="255.1" y="663.1" width="3.6" height="3.6" fill="#f4c638" transform="rotate(45 256.9 664.9)"/>
<rect x="261.7" y="663.7" width="3.6" height="3.6" fill="#f4c638" transform="rotate(45 263.5 665.5)"/>
<rect x="268.3" y="664.3" width="3.6" height="3.6" fill="#f4c638" transform="rotate(45 270.1 666.1)"/>
<rect x="274.9" y="664.9" width="3.6" height="3.6" fill="#f4c638" transform="rotate(45 276.7 666.7)"/>
<rect x="281.5" y="665.5" width="3.6" height="3.6" fill="#f4c638" transform="rotate(45 283.3 667.3)"/>
<rect x="288.1" y="666.1" width="3.6" height="3.6" fill="#f4c638" transform="rotate(45 289.9 667.9)"/>
<rect x="212.2" y="672.1" width="3.6" height="3.6" fill="#f0932e" transform="rotate(45 214.0 673.9)"/>
<rect x="218.8" y="671.5" width="3.6" height="3.6" fill="#f0932e" transform="rotate(45 220.6 673.3)"/>
<rect x="225.4" y="670.9" width="3.6" height="3.6" fill="#f0932e" transform="rotate(45 227.2 672.7)"/>
<rect x="232.0" y="670.3" width="3.6" height="3.6" fill="#f0932e" transform="rotate(45 233.8 672.1)"/>
<rect x="238.6" y="669.7" width="3.6" height="3.6" fill="#f0932e" transform="rotate(45 240.4 671.5)"/>
<rect x="245.2" y="669.2" width="3.6" height="3.6" fill="#f0932e" transform="rotate(45 247.0 671.0)"/>
<rect x="251.8" y="668.8" width="3.6" height="3.6" fill="#f0932e" transform="rotate(45 253.6 670.6)"/>
<rect x="258.4" y="669.4" width="3.6" height="3.6" fill="#f0932e" transform="rotate(45 260.2 671.2)"/>
<rect x="265.0" y="670.0" width="3.6" height="3.6" fill="#f0932e" transform="rotate(45 266.8 671.8)"/>
<rect x="271.6" y="670.6" width="3.6" height="3.6" fill="#f0932e" transform="rotate(45 273.4 672.4)"/>
<rect x="278.2" y="671.2" width="3.6" height="3.6" fill="#f0932e" transform="rotate(45 280.0 673.0)"/>
<rect x="284.8" y="671.8" width="3.6" height="3.6" fill="#f0932e" transform="rotate(45 286.6 673.6)"/>
<path d="M211.0,688.0 C218.0,686.3 218.2,685.0 232.0,683.0 C245.8,681.0 239.2,681.3 252.5,682.0 C265.8,682.7 259.5,682.2 272.0,685.0 C284.5,687.8 284.0,688.7 290.0,690.5" fill="none" stroke="#2a3e48" stroke-width="1.8" stroke-linecap="round" stroke-linejoin="round" />
<path d="M209.0,676.0 C218.3,672.8 289.1,670.4 298.0,676.0 C306.9,681.6 297.3,725.7 298.0,732.0 C298.7,738.3 305.0,737.0 305.0,739.0 C305.0,741.0 299.9,749.5 298.0,752.0 C296.1,754.5 286.9,760.7 286.0,764.0 C285.1,767.3 288.9,778.4 289.0,785.0 C289.1,791.6 296.6,825.5 287.0,830.0 C277.4,834.5 202.1,833.1 193.0,830.0 C183.9,826.9 195.4,804.9 196.0,799.0 C196.6,793.1 199.3,775.7 199.0,771.0 C198.7,766.3 193.8,755.3 193.0,752.0 C192.2,748.7 190.7,740.8 191.0,738.0 C191.3,735.2 194.6,727.0 196.0,724.0 C197.4,721.0 203.7,712.8 205.0,708.0 C206.3,703.2 199.7,679.2 209.0,676.0Z" fill="#d3cab6" />
<path d="M209.0,686.0 C219.3,685.0 219.7,683.0 240.0,683.0 C260.3,683.0 253.3,683.0 270.0,686.0 C286.7,689.0 283.3,690.0 290.0,692.0" fill="none" stroke="#2a3a44" stroke-width="1.8" stroke-linecap="round" stroke-linejoin="round" />
<path d="M209.0,702.0 C212.5,696.6 212.4,698.6 222.0,697.0 C231.6,695.4 237.4,694.8 250.0,695.0 C262.6,695.2 267.4,695.0 276.0,698.0 C284.6,701.0 284.2,702.4 287.0,708.0 C289.8,713.6 289.2,716.6 288.0,722.0 C286.8,727.4 288.1,728.0 282.0,731.0 C275.9,734.0 272.7,734.1 262.0,735.0 C251.3,735.9 247.2,735.7 236.0,735.0 C224.8,734.3 220.8,735.5 214.0,732.0 C207.2,728.5 208.2,727.0 207.0,720.0 C205.8,713.0 205.5,707.4 209.0,702.0Z" fill="#f4cc3a" />
<path d="M213.0,712.0 C215.7,710.0 215.7,706.7 221.0,706.0 C226.3,705.3 228.0,706.0 229.0,710.0 C230.0,714.0 225.7,715.3 224.0,718.0" fill="none" stroke="#23242a" stroke-width="2.2" stroke-linecap="round" stroke-linejoin="round" />
<path d="M245.0,708.0 C248.0,706.3 247.0,703.7 254.0,703.0 C261.0,702.3 258.7,703.0 266.0,706.0 C273.3,709.0 274.7,708.0 276.0,712.0 C277.3,716.0 272.0,716.0 270.0,718.0" fill="none" stroke="#23242a" stroke-width="2.4" stroke-linecap="round" stroke-linejoin="round" />
<path d="M233.0,701.0 L232.5,724.0" fill="none" stroke="#23242a" stroke-width="3.2" stroke-linecap="round" stroke-linejoin="round" />
<path d="M212.0,724.0 C215.3,723.3 216.7,721.0 222.0,722.0 C227.3,723.0 226.0,725.3 228.0,727.0" fill="none" stroke="#23242a" stroke-width="2" stroke-linecap="round" stroke-linejoin="round" />
<path d="M240.0,726.0 C244.0,724.0 243.3,721.3 252.0,720.0 C260.7,718.7 256.7,719.3 266.0,722.0 C275.3,724.7 275.3,726.0 280.0,728.0" fill="none" stroke="#23242a" stroke-width="2" stroke-linecap="round" stroke-linejoin="round" />
<path d="M196.0,738.0 C196.8,735.0 200.0,733.6 204.0,733.0 C208.0,732.4 214.4,732.0 216.0,735.0 C217.6,738.0 215.2,745.4 212.0,748.0 C208.8,750.6 203.2,750.0 200.0,748.0 C196.8,746.0 195.2,741.0 196.0,738.0Z" fill="#f28a22" />
<path d="M218.0,736.0 C220.6,733.2 228.8,731.6 232.0,734.0 C235.2,736.4 235.2,744.4 234.0,748.0 C232.8,751.6 229.0,752.0 226.0,752.0 C223.0,752.0 220.6,751.2 219.0,748.0 C217.4,744.8 215.4,738.8 218.0,736.0Z" fill="#f28a22" />
<path d="M237.0,735.0 C239.4,732.4 245.0,732.8 250.0,733.0 C255.0,733.2 260.4,733.4 262.0,736.0 C263.6,738.6 261.2,743.2 258.0,746.0 C254.8,748.8 250.0,750.0 246.0,750.0 C242.0,750.0 239.8,749.0 238.0,746.0 C236.2,743.0 234.6,737.6 237.0,735.0Z" fill="#f28a22" />
<path d="M195.0,736.0 C198.7,734.3 199.0,731.7 206.0,731.0 C213.0,730.3 212.7,733.0 216.0,734.0" fill="none" stroke="#23242a" stroke-width="1.6" stroke-linecap="round" stroke-linejoin="round" />
<path d="M198.0,752.0 C200.0,747.2 207.2,747.6 214.0,748.0 C220.8,748.4 224.8,754.0 232.0,754.0 C239.2,754.0 244.0,748.4 250.0,748.0 C256.0,747.6 258.8,747.6 262.0,752.0 C265.2,756.4 266.0,762.4 266.0,770.0 C266.0,777.6 264.0,782.4 262.0,790.0 C260.0,797.6 260.4,802.4 256.0,808.0 C251.6,813.6 248.4,815.6 240.0,818.0 C231.6,820.4 222.0,821.2 214.0,820.0 C206.0,818.8 202.8,818.0 200.0,812.0 C197.2,806.0 199.2,798.0 200.0,790.0 C200.8,782.0 204.4,779.6 204.0,772.0 C203.6,764.4 196.0,756.8 198.0,752.0Z" fill="#222b36" />
<path d="M211.0,757.0 L240.0,755.0 L243.0,768.0 L211.0,769.0Z" fill="#ddd6c4" />
<path d="M210.5,766.0 L243.0,765.0 L243.0,789.0 L210.5,790.0Z" fill="#252c3c" />
<path d="M208.0,760.0 L208.0,792.0" fill="none" stroke="#ddd6c4" stroke-width="2.6" stroke-linecap="round" stroke-linejoin="round" />
<path d="M246.0,760.0 L246.0,790.0" fill="none" stroke="#ddd6c4" stroke-width="2.6" stroke-linecap="round" stroke-linejoin="round" />
<path d="M207.0,792.0 C210.0,790.0 216.2,790.0 224.0,789.0 C231.8,788.0 241.4,786.0 246.0,787.0 C250.6,788.0 248.6,791.2 247.0,794.0 C245.4,796.8 243.4,799.2 238.0,801.0 C232.6,802.8 225.8,803.4 220.0,803.0 C214.2,802.6 211.6,801.2 209.0,799.0 C206.4,796.8 204.0,794.0 207.0,792.0Z" fill="#f59a28" />
<path d="M208.0,804.0 C210.4,802.6 214.4,806.8 222.0,806.0 C229.6,805.2 241.4,798.8 246.0,800.0 C250.6,801.2 249.0,808.8 245.0,812.0 C241.0,815.2 233.0,815.8 226.0,816.0 C219.0,816.2 213.6,815.4 210.0,813.0 C206.4,810.6 205.6,805.4 208.0,804.0Z" fill="#ddd6c4" />
<path d="M268.0,748.0 C272.7,746.0 272.0,744.7 282.0,742.0 C292.0,739.3 292.7,740.7 298.0,740.0" fill="none" stroke="#222b36" stroke-width="4.5" stroke-linecap="round" stroke-linejoin="round" />
<path d="M264.0,758.0 C268.7,756.3 268.7,754.7 278.0,753.0 C287.3,751.3 287.3,753.0 292.0,753.0" fill="none" stroke="#222b36" stroke-width="4" stroke-linecap="round" stroke-linejoin="round" />
<path d="M270.0,772.0 L284.0,764.0" fill="none" stroke="#222b36" stroke-width="4" stroke-linecap="round" stroke-linejoin="round" />
<path d="M268.0,794.0 C270.7,790.0 270.7,788.7 276.0,782.0 C281.3,775.3 281.3,776.7 284.0,774.0" fill="none" stroke="#222b36" stroke-width="4.5" stroke-linecap="round" stroke-linejoin="round" />
<path d="M262.0,810.0 C266.0,807.3 266.0,808.7 274.0,802.0 C282.0,795.3 282.0,794.0 286.0,790.0" fill="none" stroke="#222b36" stroke-width="4.5" stroke-linecap="round" stroke-linejoin="round" />
<path d="M288.0,742.0 L298.0,739.0" fill="none" stroke="#e9b83a" stroke-width="2.4" stroke-linecap="round" stroke-linejoin="round" />
<path d="M196.0,814.0 C200.2,813.6 205.2,821.2 216.0,822.0 C226.8,822.8 236.0,821.2 250.0,818.0 C264.0,814.8 278.8,806.0 286.0,806.0 C293.2,806.0 293.2,814.0 286.0,818.0 C278.8,822.0 265.2,824.0 250.0,826.0 C234.8,828.0 221.0,828.4 210.0,828.0 C199.0,827.6 197.8,826.8 195.0,824.0 C192.2,821.2 191.8,814.4 196.0,814.0Z" fill="#222b36" />
<path d="M196.0,744.0 C197.0,748.7 196.7,748.7 199.0,758.0 C201.3,767.3 203.0,761.3 203.0,772.0 C203.0,782.7 200.0,778.0 199.0,790.0 C198.0,802.0 200.3,798.0 200.0,808.0 C199.7,818.0 198.7,816.0 198.0,820.0" fill="none" stroke="#222b36" stroke-width="5" stroke-linecap="round" stroke-linejoin="round" />
<path d="M284.0,764.0 C285.3,757.3 289.7,753.7 294.0,750.0 C298.3,746.3 304.0,740.3 310.0,742.0 C316.0,743.7 325.3,752.0 330.0,760.0 C334.7,768.0 335.5,778.3 338.0,790.0 C340.5,801.7 354.2,823.3 345.0,830.0 C335.8,836.7 292.8,836.7 283.0,830.0 C273.2,823.3 285.8,801.0 286.0,790.0 C286.2,779.0 282.7,770.7 284.0,764.0Z" fill="#f0a92f" />
<path d="M292.0,742.0 C294.3,737.3 297.9,735.5 304.0,736.0 C310.1,736.5 313.8,738.4 318.0,744.0 C322.2,749.6 324.8,755.8 322.0,760.0 C319.2,764.2 312.5,762.9 306.0,762.0 C299.5,761.1 297.3,760.7 294.0,756.0 C290.7,751.3 289.7,746.7 292.0,742.0Z" fill="#3a2a20" opacity="0.85"/>
<path d="M300.0,760.0 C303.6,748.8 314.0,762.0 320.0,770.0 C326.0,778.0 330.0,788.8 330.0,800.0 C330.0,811.2 325.6,820.8 320.0,826.0 C314.4,831.2 306.0,839.2 302.0,826.0 C298.0,812.8 296.4,771.2 300.0,760.0Z" fill="#f6b945" opacity="0.8" filter="url(#b2)"/>
<path d="M312.0,828.0 C316.7,822.7 318.7,820.7 326.0,812.0 C333.3,803.3 331.3,805.3 334.0,802.0" fill="none" stroke="#8d8f8c" stroke-width="2" stroke-linecap="round" stroke-linejoin="round" />
<path d="M508.0,560.0 C516.7,552.7 537.3,556.0 560.0,556.0 C582.7,556.0 629.8,552.7 644.0,560.0 C658.2,567.3 645.2,589.3 645.0,600.0 C644.8,610.7 644.8,617.3 643.0,624.0 C641.2,630.7 634.3,634.0 634.0,640.0 C633.7,646.0 639.0,652.7 641.0,660.0 C643.0,667.3 645.5,676.3 646.0,684.0 C646.5,691.7 646.2,697.8 644.0,706.0 C641.8,714.2 637.3,724.0 633.0,733.0 C628.7,742.0 623.2,753.0 618.0,760.0 C612.8,767.0 607.7,770.7 602.0,775.0 C596.3,779.3 590.7,783.3 584.0,786.0 C577.3,788.7 568.7,791.7 562.0,791.0 C555.3,790.3 549.2,786.5 544.0,782.0 C538.8,777.5 534.7,772.8 531.0,764.0 C527.3,755.2 524.7,742.3 522.0,729.0 C519.3,715.7 516.7,698.8 515.0,684.0 C513.3,669.2 513.2,654.0 512.0,640.0 C510.8,626.0 508.7,613.3 508.0,600.0 C507.3,586.7 499.3,567.3 508.0,560.0Z" fill="#b9bab1" />
<path d="M608.0,772.0 C609.0,763.7 619.3,757.3 624.0,750.0 C628.7,742.7 633.2,728.0 636.0,728.0 C638.8,728.0 640.0,739.7 641.0,750.0 C642.0,760.3 641.7,776.7 642.0,790.0 C642.3,803.3 645.7,823.3 643.0,830.0 C640.3,836.7 630.2,835.0 626.0,830.0 C621.8,825.0 621.0,809.7 618.0,800.0 C615.0,790.3 607.0,780.3 608.0,772.0Z" fill="#aaa9a5" />
<path d="M604.0,790.0 C608.7,788.0 609.3,784.7 618.0,784.0 C626.7,783.3 626.0,786.7 630.0,788.0" fill="none" stroke="#5b6870" stroke-width="1.6" stroke-linecap="round" stroke-linejoin="round" />
<path d="M560.0,548.0 C556.0,554.0 556.0,554.0 548.0,566.0 C540.0,578.0 540.0,578.0 536.0,584.0" fill="none" stroke="#9b9a90" stroke-width="2.2" stroke-linecap="round" stroke-linejoin="round" opacity="0.7" filter="url(#b1)"/>
<path d="M600.0,540.0 C593.3,546.7 591.3,545.3 580.0,560.0 C568.7,574.7 570.7,576.0 566.0,584.0" fill="none" stroke="#a3a298" stroke-width="3" stroke-linecap="round" stroke-linejoin="round" opacity="0.6" filter="url(#b1)"/>
<path d="M489.7,564.5 L522.3,546.8 L532.6,576.7 L496.0,597.0Z" fill="#c4c6bd" />
<path d="M490.0,565.0 C495.3,561.7 495.3,561.0 506.0,555.0 C516.7,549.0 516.7,549.7 522.0,547.0" fill="none" stroke="#f2a83c" stroke-width="4" stroke-linecap="round" stroke-linejoin="round" />
<path d="M491.0,568.5 L523.0,550.5" fill="none" stroke="#f6d27a" stroke-width="1.5" stroke-linecap="round" stroke-linejoin="round" />
<path d="M496.0,596.0 C502.0,593.3 501.8,594.3 514.0,588.0 C526.2,581.7 526.3,580.7 532.5,577.0" fill="none" stroke="#f2a83c" stroke-width="4.5" stroke-linecap="round" stroke-linejoin="round" />
<path d="M497.0,600.0 L533.0,581.0" fill="none" stroke="#2d3c46" stroke-width="1.4" stroke-linecap="round" stroke-linejoin="round" />
<path d="M496.0,582.0 l2.5,9 M498.6,580.0 l2.5,9" stroke="#27404e" stroke-width="1.7" fill="none"/>
<path d="M501.4,578.9 l2.5,9 M504.0,576.9 l2.5,9" stroke="#27404e" stroke-width="1.7" fill="none"/>
<path d="M506.8,575.8 l2.5,9 M509.4,573.8 l2.5,9" stroke="#27404e" stroke-width="1.7" fill="none"/>
<path d="M512.2,572.7 l2.5,9 M514.8,570.7 l2.5,9" stroke="#27404e" stroke-width="1.7" fill="none"/>
<path d="M517.6,569.6 l2.5,9 M520.2,567.6 l2.5,9" stroke="#27404e" stroke-width="1.7" fill="none"/>
<path d="M523.0,566.5 l2.5,9 M525.6,564.5 l2.5,9" stroke="#27404e" stroke-width="1.7" fill="none"/>
<path d="M516.0,592.0 L520.0,604.0 L530.0,610.0 L534.0,623.0" fill="none" stroke="#f3a43a" stroke-width="5.5" stroke-linecap="round" stroke-linejoin="round" />
<path d="M519.0,591.0 L523.0,601.0 L533.0,607.0 L537.0,620.0" fill="none" stroke="#f6cf4a" stroke-width="2.5" stroke-linecap="round" stroke-linejoin="round" />
<path d="M525.0,590.0 L529.0,601.0 L539.0,607.0 L542.0,618.0" fill="none" stroke="#24343e" stroke-width="3.2" stroke-linecap="round" stroke-linejoin="round" />
<path d="M536.0,592.0 L541.0,602.0 L552.0,607.0 L555.0,612.0" fill="none" stroke="#f3a43a" stroke-width="4" stroke-linecap="round" stroke-linejoin="round" />
<path d="M513.0,648.0 L567.0,605.0 L575.0,636.0 L517.0,687.0Z" fill="#c9c2ae" opacity="0.9"/>
<path d="M513.0,647.6 C522.0,640.4 522.0,640.3 540.0,626.0 C558.0,611.7 558.0,611.8 567.0,604.7" fill="none" stroke="#2d4650" stroke-width="1.8" stroke-linecap="round" stroke-linejoin="round" />
<path d="M516.7,686.8 C526.1,678.2 525.7,677.8 545.0,661.0 C564.3,644.2 564.7,644.6 574.6,636.4" fill="none" stroke="#2d4650" stroke-width="1.8" stroke-linecap="round" stroke-linejoin="round" />
<rect x="514.2" y="653.2" width="3.6" height="3.6" fill="#f0932e" transform="rotate(10 516.0 655.0)"/>
<rect x="520.0" y="648.4" width="3.6" height="3.6" fill="#f0932e" transform="rotate(10 521.8 650.2)"/>
<rect x="525.8" y="643.6" width="3.6" height="3.6" fill="#f0932e" transform="rotate(10 527.6 645.4)"/>
<rect x="531.5" y="638.9" width="3.6" height="3.6" fill="#f0932e" transform="rotate(10 533.3 640.7)"/>
<rect x="537.3" y="634.1" width="3.6" height="3.6" fill="#f0932e" transform="rotate(10 539.1 635.9)"/>
<rect x="543.1" y="629.3" width="3.6" height="3.6" fill="#f0932e" transform="rotate(10 544.9 631.1)"/>
<rect x="548.9" y="624.5" width="3.6" height="3.6" fill="#f0932e" transform="rotate(10 550.7 626.3)"/>
<rect x="554.6" y="619.8" width="3.6" height="3.6" fill="#f0932e" transform="rotate(10 556.4 621.6)"/>
<rect x="560.4" y="615.0" width="3.6" height="3.6" fill="#f0932e" transform="rotate(10 562.2 616.8)"/>
<rect x="566.2" y="610.2" width="3.6" height="3.6" fill="#f0932e" transform="rotate(10 568.0 612.0)"/>
<rect x="518.7" y="661.2" width="3.6" height="3.6" fill="#f4c638" transform="rotate(10 520.5 663.0)"/>
<rect x="524.4" y="656.5" width="3.6" height="3.6" fill="#f4c638" transform="rotate(10 526.2 658.3)"/>
<rect x="530.2" y="651.7" width="3.6" height="3.6" fill="#f4c638" transform="rotate(10 532.0 653.5)"/>
<rect x="536.0" y="646.9" width="3.6" height="3.6" fill="#f4c638" transform="rotate(10 537.8 648.7)"/>
<rect x="541.8" y="642.1" width="3.6" height="3.6" fill="#f4c638" transform="rotate(10 543.6 643.9)"/>
<rect x="547.5" y="637.4" width="3.6" height="3.6" fill="#f4c638" transform="rotate(10 549.3 639.2)"/>
<rect x="553.3" y="632.6" width="3.6" height="3.6" fill="#f4c638" transform="rotate(10 555.1 634.4)"/>
<rect x="559.1" y="627.8" width="3.6" height="3.6" fill="#f4c638" transform="rotate(10 560.9 629.6)"/>
<rect x="564.9" y="623.0" width="3.6" height="3.6" fill="#f4c638" transform="rotate(10 566.7 624.8)"/>
<rect x="570.7" y="618.2" width="3.6" height="3.6" fill="#f4c638" transform="rotate(10 572.5 620.0)"/>
<rect x="518.1" y="669.3" width="3.6" height="3.6" fill="#f0932e" transform="rotate(10 519.9 671.1)"/>
<rect x="523.9" y="664.5" width="3.6" height="3.6" fill="#f0932e" transform="rotate(10 525.7 666.3)"/>
<rect x="529.7" y="659.7" width="3.6" height="3.6" fill="#f0932e" transform="rotate(10 531.5 661.5)"/>
<rect x="535.5" y="655.0" width="3.6" height="3.6" fill="#f0932e" transform="rotate(10 537.3 656.8)"/>
<rect x="541.2" y="650.2" width="3.6" height="3.6" fill="#f0932e" transform="rotate(10 543.0 652.0)"/>
<rect x="547.0" y="645.4" width="3.6" height="3.6" fill="#f0932e" transform="rotate(10 548.8 647.2)"/>
<rect x="552.8" y="640.6" width="3.6" height="3.6" fill="#f0932e" transform="rotate(10 554.6 642.4)"/>
<rect x="558.6" y="635.9" width="3.6" height="3.6" fill="#f0932e" transform="rotate(10 560.4 637.7)"/>
<rect x="564.3" y="631.1" width="3.6" height="3.6" fill="#f0932e" transform="rotate(10 566.1 632.9)"/>
<rect x="570.1" y="626.3" width="3.6" height="3.6" fill="#f0932e" transform="rotate(10 571.9 628.1)"/>
<rect x="522.6" y="677.4" width="3.6" height="3.6" fill="#f0932e" transform="rotate(10 524.4 679.1)"/>
<rect x="528.4" y="672.6" width="3.6" height="3.6" fill="#f0932e" transform="rotate(10 530.2 674.4)"/>
<rect x="534.1" y="667.8" width="3.6" height="3.6" fill="#f0932e" transform="rotate(10 535.9 669.6)"/>
<rect x="539.9" y="663.0" width="3.6" height="3.6" fill="#f0932e" transform="rotate(10 541.7 664.8)"/>
<rect x="545.7" y="658.2" width="3.6" height="3.6" fill="#f0932e" transform="rotate(10 547.5 660.0)"/>
<rect x="551.5" y="653.5" width="3.6" height="3.6" fill="#f0932e" transform="rotate(10 553.3 655.3)"/>
<rect x="557.2" y="648.7" width="3.6" height="3.6" fill="#f0932e" transform="rotate(10 559.0 650.5)"/>
<rect x="563.0" y="643.9" width="3.6" height="3.6" fill="#f0932e" transform="rotate(10 564.8 645.7)"/>
<rect x="568.8" y="639.1" width="3.6" height="3.6" fill="#f0932e" transform="rotate(10 570.6 640.9)"/>
<rect x="574.6" y="634.4" width="3.6" height="3.6" fill="#f0932e" transform="rotate(10 576.4 636.1)"/>
<path d="M569.0,588.0 L590.0,576.0 L612.0,567.0 L640.0,582.0 L642.0,614.0 L606.0,599.0 L569.0,601.0Z" fill="#c2c4bb" />
<path d="M612.0,567.5 C616.7,569.3 616.7,568.0 626.0,573.0 C635.3,578.0 635.3,579.3 640.0,582.5" fill="none" stroke="#f2a83c" stroke-width="4" stroke-linecap="round" stroke-linejoin="round" />
<path d="M606.0,571.0 L616.0,568.0" fill="none" stroke="#24343e" stroke-width="1.6" stroke-linecap="round" stroke-linejoin="round" />
<path d="M569.0,590.0 C575.3,590.8 575.5,589.5 588.0,592.5 C600.5,595.5 594.4,594.5 606.4,599.0 C618.4,603.5 612.2,601.0 624.0,606.0 C635.8,611.0 635.9,611.3 641.8,614.0" fill="none" stroke="#f2a83c" stroke-width="4.5" stroke-linecap="round" stroke-linejoin="round" />
<path d="M569.0,587.0 C575.3,587.8 575.5,586.5 588.0,589.5 C600.5,592.5 594.4,591.5 606.4,596.0 C618.4,600.5 612.2,598.0 624.0,603.0 C635.8,608.0 635.9,608.3 641.8,611.0" fill="none" stroke="#f6d27a" stroke-width="1.6" stroke-linecap="round" stroke-linejoin="round" />
<path d="M588.0,578.0 l-1.2,10 M591.0,579.0 l-1.2,9" stroke="#27404e" stroke-width="1.8" fill="none"/>
<path d="M594.4,580.6 l-1.2,10 M597.4,581.6 l-1.2,9" stroke="#27404e" stroke-width="1.8" fill="none"/>
<path d="M600.8,583.2 l-1.2,10 M603.8,584.2 l-1.2,9" stroke="#27404e" stroke-width="1.8" fill="none"/>
<path d="M607.2,585.8 l-1.2,10 M610.2,586.8 l-1.2,9" stroke="#27404e" stroke-width="1.8" fill="none"/>
<path d="M613.6,588.4 l-1.2,10 M616.6,589.4 l-1.2,9" stroke="#27404e" stroke-width="1.8" fill="none"/>
<path d="M620.0,591.0 l-1.2,10 M623.0,592.0 l-1.2,9" stroke="#27404e" stroke-width="1.8" fill="none"/>
<path d="M626.4,593.6 l-1.2,10 M629.4,594.6 l-1.2,9" stroke="#27404e" stroke-width="1.8" fill="none"/>
<path d="M632.8,596.2 l-1.2,10 M635.8,597.2 l-1.2,9" stroke="#27404e" stroke-width="1.8" fill="none"/>
<path d="M569.0,601.0 L580.0,621.5 L597.0,608.4 L612.0,625.0 L623.0,616.0 L638.0,627.0 L642.0,623.0" fill="none" stroke="#1f3038" stroke-width="4" stroke-linecap="round" stroke-linejoin="round" />
<path d="M572.0,612.0 L581.0,630.5 L597.0,617.0 L612.5,633.5 L624.0,624.5 L638.5,636.0 L642.0,632.0" fill="none" stroke="#f6c83a" stroke-width="6" stroke-linecap="round" stroke-linejoin="round" />
<path d="M573.0,620.0 L582.0,637.0 L597.0,624.5 L613.0,640.0 L625.0,631.5 L639.0,643.0" fill="none" stroke="#f0952e" stroke-width="3.5" stroke-linecap="round" stroke-linejoin="round" />
<path d="M582.0,640.0 C580.3,646.7 581.0,646.7 577.0,660.0 C573.0,673.3 574.3,668.0 570.0,680.0 C565.7,692.0 565.2,685.0 564.0,696.0 C562.8,707.0 567.8,702.3 566.5,713.0 C565.2,723.7 563.0,719.0 560.0,728.0 C557.0,737.0 557.6,731.0 557.6,740.0 C557.6,749.0 556.5,745.7 560.0,755.0 C563.5,764.3 561.3,761.0 568.0,768.0 C574.7,775.0 571.7,773.0 580.0,776.0 C588.3,779.0 585.3,780.3 593.0,777.0 C600.7,773.7 599.7,769.7 603.0,766.0" fill="none" stroke="#1f3a48" stroke-width="9.5" stroke-linecap="round" stroke-linejoin="round" />
<path d="M602.0,662.0 C601.0,668.0 600.7,668.7 599.0,680.0 C597.3,691.3 599.3,685.3 597.0,696.0 C594.7,706.7 594.0,702.7 592.0,712.0 C590.0,721.3 590.0,714.7 591.0,724.0 C592.0,733.3 594.0,730.0 595.0,740.0 C596.0,750.0 594.7,745.7 594.0,754.0 C593.3,762.3 593.3,761.3 593.0,765.0" fill="none" stroke="#1f3a48" stroke-width="7.5" stroke-linecap="round" stroke-linejoin="round" />
<path d="M613.0,678.0 C612.3,683.3 611.3,684.0 611.0,694.0 C610.7,704.0 609.0,700.0 612.0,708.0 C615.0,716.0 616.0,712.3 620.0,718.0 C624.0,723.7 625.3,719.3 624.0,725.0 C622.7,730.7 617.3,726.7 616.0,735.0 C614.7,743.3 618.7,745.0 620.0,750.0" fill="none" stroke="#1f3a48" stroke-width="6" stroke-linecap="round" stroke-linejoin="round" />
<path d="M628.0,712.0 C629.3,715.3 632.7,714.7 632.0,722.0 C631.3,729.3 628.0,730.0 626.0,734.0" fill="none" stroke="#1f3a48" stroke-width="4" stroke-linecap="round" stroke-linejoin="round" />
<path d="M606.0,649.0 C607.6,646.2 614.4,649.4 620.0,652.0 C625.6,654.6 629.4,656.4 634.0,662.0 C638.6,667.6 640.8,672.4 643.0,680.0 C645.2,687.6 645.6,693.6 645.0,700.0 C644.4,706.4 643.0,712.0 640.0,712.0 C637.0,712.0 633.6,705.6 630.0,700.0 C626.4,694.4 625.6,690.8 622.0,684.0 C618.4,677.2 615.2,673.0 612.0,666.0 C608.8,659.0 604.4,651.8 606.0,649.0Z" fill="#f1b93c" />
<path d="M622.0,664.0 C623.6,662.8 630.0,666.8 634.0,672.0 C638.0,677.2 640.8,683.6 642.0,690.0 C643.2,696.4 642.0,703.6 640.0,704.0 C638.0,704.4 634.8,697.2 632.0,692.0 C629.2,686.8 628.0,683.6 626.0,678.0 C624.0,672.4 620.4,665.2 622.0,664.0Z" fill="#ee8a2a" opacity="0.9"/>
<path d="M612.0,656.0 C614.7,660.0 615.3,660.0 620.0,668.0 C624.7,676.0 622.0,671.3 626.0,680.0 C630.0,688.7 630.0,689.3 632.0,694.0" fill="none" stroke="#23272c" stroke-width="2.2" stroke-linecap="round" stroke-linejoin="round" stroke-dasharray="3 2.5"/>
<path d="M620.0,654.0 C623.3,658.0 624.0,656.7 630.0,666.0 C636.0,675.3 635.3,676.7 638.0,682.0" fill="none" stroke="#23272c" stroke-width="1.8" stroke-linecap="round" stroke-linejoin="round" stroke-dasharray="2.5 3"/>
<path d="M606.0,646.0 C610.0,646.0 610.0,644.0 618.0,646.0 C626.0,648.0 626.0,650.0 630.0,652.0" fill="none" stroke="#2d4650" stroke-width="1.6" stroke-linecap="round" stroke-linejoin="round" />
<path d="M403.0,526.0 C390.2,527.6 392.0,526.4 380.0,532.0 C368.0,537.6 367.6,540.1 358.0,547.0 C348.4,553.9 351.2,550.5 344.0,558.0 C336.8,565.5 337.1,565.4 331.0,575.0 C324.9,584.6 326.1,583.3 321.0,594.0 C315.9,604.7 316.0,603.3 312.0,615.0 C308.0,626.7 309.2,626.8 306.0,638.0 C302.8,649.2 302.7,646.3 300.0,657.0 C297.3,667.7 298.1,666.5 296.0,678.0 C293.9,689.5 293.6,689.9 292.0,700.0 C290.4,710.1 288.9,707.2 290.0,716.0 C291.1,724.8 290.7,723.4 296.0,733.0 C301.3,742.6 303.6,741.6 310.0,752.0 C316.4,762.4 314.9,760.5 320.0,772.0 C325.1,783.5 325.5,780.6 329.0,795.0 C332.5,809.4 331.1,803.3 333.0,826.0 C334.9,848.7 292.0,865.6 336.0,880.0 C380.0,894.4 454.0,894.4 498.0,880.0 C542.0,865.6 498.3,845.2 501.0,826.0 C503.7,806.8 502.4,817.1 508.0,808.0 C513.6,798.9 514.8,800.3 522.0,792.0 C529.2,783.7 532.9,788.2 535.0,777.0 C537.1,765.8 533.5,764.1 530.0,750.0 C526.5,735.9 525.7,740.0 522.0,724.0 C518.3,708.0 518.4,707.1 516.0,690.0 C513.6,672.9 515.1,676.0 513.0,660.0 C510.9,644.0 511.5,644.9 508.0,630.0 C504.5,615.1 504.0,616.5 500.0,604.0 C496.0,591.5 497.0,594.2 493.0,583.0 C489.0,571.8 491.1,571.6 485.0,562.0 C478.9,552.4 479.3,554.5 470.0,547.0 C460.7,539.5 461.2,539.6 450.0,534.0 C438.8,528.4 440.5,528.1 428.0,526.0 C415.5,523.9 415.8,524.4 403.0,526.0Z" fill="#1c181a" />
<path d="M318.0,600.0 C314.7,610.7 314.0,611.3 308.0,632.0 C302.0,652.7 304.0,641.3 300.0,662.0 C296.0,682.7 297.3,676.0 296.0,694.0 C294.7,712.0 293.3,702.0 296.0,716.0 C298.7,730.0 298.0,722.7 304.0,736.0 C310.0,749.3 310.7,749.3 314.0,756.0" fill="none" stroke="#3a2e2a" stroke-width="5" stroke-linecap="round" stroke-linejoin="round" opacity="0.55" filter="url(#b2)"/>
<ellipse cx="298" cy="688" rx="6" ry="14" fill="#1c181a" transform="rotate(8 298 688)"/>
<ellipse cx="294" cy="712" rx="6" ry="12" fill="#1c181a" transform="rotate(-6 294 712)"/>
<ellipse cx="302" cy="738" rx="6" ry="10" fill="#1c181a" transform="rotate(-30 302 738)"/>
<ellipse cx="316" cy="760" rx="6" ry="10" fill="#1c181a" transform="rotate(-25 316 760)"/>
<ellipse cx="517" cy="700" rx="5" ry="14" fill="#1c181a" transform="rotate(-6 517 700)"/>
<ellipse cx="522" cy="735" rx="5" ry="14" fill="#1c181a" transform="rotate(-10 522 735)"/>
<ellipse cx="531" cy="765" rx="6" ry="10" fill="#1c181a" transform="rotate(-30 531 765)"/>
<ellipse cx="508" cy="640" rx="5" ry="14" fill="#1c181a" transform="rotate(-10 508 640)"/>
<ellipse cx="304" cy="650" rx="5" ry="13" fill="#1c181a" transform="rotate(14 304 650)"/>
<ellipse cx="314" cy="612" rx="5" ry="13" fill="#1c181a" transform="rotate(18 314 612)"/>
<path d="M292.0,724.0 C290.7,727.3 288.0,727.3 288.0,734.0 C288.0,740.7 290.7,740.7 292.0,744.0" fill="none" stroke="#2a2220" stroke-width="1.4" stroke-linecap="round" stroke-linejoin="round" />
<path d="M296.0,700.0 C293.7,702.7 291.7,702.0 289.0,708.0 C286.3,714.0 288.3,714.7 288.0,718.0" fill="none" stroke="#2a2220" stroke-width="1.2" stroke-linecap="round" stroke-linejoin="round" />
<path d="M536.0,770.0 C537.3,772.7 540.0,772.7 540.0,778.0 C540.0,783.3 537.3,783.3 536.0,786.0" fill="none" stroke="#2a2220" stroke-width="1.4" stroke-linecap="round" stroke-linejoin="round" />
<path d="M352.0,572.0 C348.0,580.0 347.3,578.7 340.0,596.0 C332.7,613.3 336.0,605.3 330.0,624.0 C324.0,642.7 324.7,642.7 322.0,652.0" fill="none" stroke="#4b4b53" stroke-width="8" stroke-linecap="round" stroke-linejoin="round" opacity="0.8" filter="url(#b2)"/>
<path d="M386.0,548.0 C380.0,554.7 378.7,552.0 368.0,568.0 C357.3,584.0 361.3,577.3 354.0,596.0 C346.7,614.7 348.7,614.7 346.0,624.0" fill="none" stroke="#45454d" stroke-width="7" stroke-linecap="round" stroke-linejoin="round" opacity="0.75" filter="url(#b2)"/>
<path d="M396.0,560.0 C391.3,568.7 390.7,568.0 382.0,586.0 C373.3,604.0 374.0,604.7 370.0,614.0" fill="none" stroke="#3a3a41" stroke-width="5" stroke-linecap="round" stroke-linejoin="round" opacity="0.75" filter="url(#b2)"/>
<path d="M424.0,548.0 C431.3,554.0 433.3,551.3 446.0,566.0 C458.7,580.7 454.0,574.0 462.0,592.0 C470.0,610.0 467.3,610.7 470.0,620.0" fill="none" stroke="#43434b" stroke-width="7" stroke-linecap="round" stroke-linejoin="round" opacity="0.75" filter="url(#b2)"/>
<path d="M452.0,556.0 C459.3,563.3 462.0,561.3 474.0,578.0 C486.0,594.7 480.7,586.0 488.0,606.0 C495.3,626.0 493.3,627.3 496.0,638.0" fill="none" stroke="#4b4b53" stroke-width="8" stroke-linecap="round" stroke-linejoin="round" opacity="0.8" filter="url(#b2)"/>
<path d="M470.0,630.0 C476.0,636.7 478.0,634.7 488.0,650.0 C498.0,665.3 494.7,657.3 500.0,676.0 C505.3,694.7 502.7,696.0 504.0,706.0" fill="none" stroke="#404048" stroke-width="7" stroke-linecap="round" stroke-linejoin="round" opacity="0.7" filter="url(#b2)"/>
<path d="M330.0,660.0 C327.3,670.0 323.3,670.0 322.0,690.0 C320.7,710.0 320.7,701.3 326.0,720.0 C331.3,738.7 334.0,737.3 338.0,746.0" fill="none" stroke="#3f3a3a" stroke-width="7" stroke-linecap="round" stroke-linejoin="round" opacity="0.7" filter="url(#b2)"/>
<path d="M346.0,700.0 C345.3,710.0 340.7,711.3 344.0,730.0 C347.3,748.7 352.0,747.3 356.0,756.0" fill="none" stroke="#383436" stroke-width="6" stroke-linecap="round" stroke-linejoin="round" opacity="0.7" filter="url(#b2)"/>
<path d="M496.0,720.0 C499.3,728.7 499.3,730.0 506.0,746.0 C512.7,762.0 512.7,760.7 516.0,768.0" fill="none" stroke="#3f3a3a" stroke-width="6" stroke-linecap="round" stroke-linejoin="round" opacity="0.7" filter="url(#b2)"/>
<path d="M312.0,690.0 C310.7,698.7 306.7,699.3 308.0,716.0 C309.3,732.7 313.3,732.0 316.0,740.0" fill="none" stroke="#3f3a3a" stroke-width="5" stroke-linecap="round" stroke-linejoin="round" opacity="0.6" filter="url(#b2)"/>
<path d="M404.0,540.0 C404.0,546.7 404.3,545.0 404.0,560.0 C403.7,575.0 403.0,570.7 403.0,585.0 C403.0,599.3 403.7,597.0 404.0,603.0" fill="none" stroke="#54443f" stroke-width="1.8" stroke-linecap="round" stroke-linejoin="round" />
<path d="M392.0,506.0 C395.2,501.2 398.5,502.4 406.0,500.0 C413.5,497.6 411.7,497.3 420.0,497.0 C428.3,496.7 428.5,497.1 437.0,499.0 C445.5,500.9 445.1,500.8 452.0,504.0 C458.9,507.2 458.2,506.7 463.0,511.0 C467.8,515.3 467.3,514.4 470.0,520.0 C472.7,525.6 473.0,526.1 473.0,532.0 C473.0,537.9 472.9,538.5 470.0,542.0 C467.1,545.5 466.3,546.6 462.0,545.0 C457.7,543.4 458.3,541.1 454.0,536.0 C449.7,530.9 452.4,530.3 446.0,526.0 C439.6,521.7 439.6,522.1 430.0,520.0 C420.4,517.9 419.6,518.5 410.0,518.0 C400.4,517.5 398.8,521.2 394.0,518.0 C389.2,514.8 388.8,510.8 392.0,506.0Z" fill="#ebc8be" />
<path d="M394.0,510.0 C390.0,513.3 389.7,513.0 382.0,520.0 C374.3,527.0 377.0,524.7 371.0,531.0 C365.0,537.3 366.3,536.3 364.0,539.0" fill="none" stroke="#e9c3b9" stroke-width="11" stroke-linecap="round" stroke-linejoin="round" />
<path d="M408.0,510.0 C404.0,514.7 403.3,515.0 396.0,524.0 C388.7,533.0 391.7,529.7 386.0,537.0 C380.3,544.3 381.3,543.0 379.0,546.0" fill="none" stroke="#ecc9bf" stroke-width="11.5" stroke-linecap="round" stroke-linejoin="round" />
<path d="M428.0,514.0 C424.7,518.7 424.3,519.7 418.0,528.0 C411.7,536.3 414.0,533.0 409.0,539.0 C404.0,545.0 405.0,543.7 403.0,546.0" fill="none" stroke="#ebc6bc" stroke-width="11.5" stroke-linecap="round" stroke-linejoin="round" />
<path d="M452.0,520.0 C450.0,524.0 449.7,524.7 446.0,532.0 C442.3,539.3 443.7,536.3 441.0,542.0 C438.3,547.7 439.0,546.7 438.0,549.0" fill="none" stroke="#e8c0b6" stroke-width="11.5" stroke-linecap="round" stroke-linejoin="round" />
<path d="M404.0,502.0 C405.1,499.6 412.8,498.5 424.0,499.0 C435.2,499.5 436.4,500.0 446.0,504.0 C455.6,508.0 461.6,511.9 460.0,514.0 C458.4,516.1 450.7,513.6 440.0,512.0 C429.3,510.4 429.6,510.7 420.0,508.0 C410.4,505.3 402.9,504.4 404.0,502.0Z" fill="#f3dad3" opacity="0.8" filter="url(#b1)"/>
<path d="M389.0,522.0 L381.0,533.0" fill="none" stroke="#d3a59c" stroke-width="1.2" stroke-linecap="round" stroke-linejoin="round" opacity="0.7"/>
<path d="M413.0,526.0 L405.0,538.0" fill="none" stroke="#d3a59c" stroke-width="1.2" stroke-linecap="round" stroke-linejoin="round" opacity="0.7"/>
<path d="M360.0,537.0 C361.6,535.1 363.6,533.9 366.0,535.0 C368.4,536.1 369.5,538.3 369.0,541.0 C368.5,543.7 366.4,544.7 364.0,545.0 C361.6,545.3 361.1,544.1 360.0,542.0 C358.9,539.9 358.4,538.9 360.0,537.0Z" fill="#e2a0a6" />
<path d="M375.0,545.0 C376.6,542.9 378.3,541.2 381.0,542.0 C383.7,542.8 385.3,545.3 385.0,548.0 C384.7,550.7 382.7,551.5 380.0,552.0 C377.3,552.5 376.3,551.9 375.0,550.0 C373.7,548.1 373.4,547.1 375.0,545.0Z" fill="#e2a0a6" />
<path d="M399.0,544.0 C400.9,542.1 403.3,540.9 406.0,542.0 C408.7,543.1 409.5,545.3 409.0,548.0 C408.5,550.7 406.7,551.7 404.0,552.0 C401.3,552.3 400.3,551.1 399.0,549.0 C397.7,546.9 397.1,545.9 399.0,544.0Z" fill="#e2a0a6" />
<path d="M434.0,547.0 C435.9,545.4 438.6,544.7 441.0,546.0 C443.4,547.3 443.8,549.6 443.0,552.0 C442.2,554.4 440.4,555.0 438.0,555.0 C435.6,555.0 435.1,554.1 434.0,552.0 C432.9,549.9 432.1,548.6 434.0,547.0Z" fill="#e2a0a6" />
<path d="M496.0,834.0 C473.2,831.7 498.0,821.2 500.0,816.0 C502.0,810.8 504.7,807.0 508.0,803.0 C511.3,799.0 515.7,795.2 520.0,792.0 C524.3,788.8 529.3,785.5 534.0,784.0 C538.7,782.5 543.3,781.8 548.0,783.0 C552.7,784.2 556.0,790.5 562.0,791.0 C568.0,791.5 577.3,788.5 584.0,786.0 C590.7,783.5 597.3,775.7 602.0,776.0 C606.7,776.3 608.7,783.7 612.0,788.0 C615.3,792.3 618.8,797.0 622.0,802.0 C625.2,807.0 628.5,813.3 631.0,818.0 C633.5,822.7 659.5,827.3 637.0,830.0 C614.5,832.7 518.8,836.3 496.0,834.0Z" fill="#f3ae3c" />
<path d="M540.0,800.0 C548.0,794.0 566.8,796.4 580.0,796.0 C593.2,795.6 597.6,792.0 606.0,798.0 C614.4,804.0 635.2,820.4 622.0,826.0 C608.8,831.6 556.4,831.2 540.0,826.0 C523.6,820.8 532.0,806.0 540.0,800.0Z" fill="#f8c262" opacity="0.7" filter="url(#b2)"/>
<path d="M531.0,797.0 C536.7,801.3 535.3,800.3 548.0,810.0 C560.7,819.7 562.0,820.7 569.0,826.0" fill="none" stroke="#7f8794" stroke-width="2.2" stroke-linecap="round" stroke-linejoin="round" />
<path d="M520.0,800.0 C518.0,804.0 518.0,803.3 514.0,812.0 C510.0,820.7 510.0,821.3 508.0,826.0" fill="none" stroke="#d98e1c" stroke-width="2" stroke-linecap="round" stroke-linejoin="round" opacity="0.7"/>
<path d="M410.0,601.5 C404.4,601.2 403.9,601.5 398.0,603.0 C392.1,604.5 392.5,603.3 388.0,607.0 C383.5,610.7 384.5,611.1 381.0,617.0 C377.5,622.9 378.2,621.5 375.0,629.0 C371.8,636.5 372.7,637.5 369.0,645.0 C365.3,652.5 364.7,649.8 361.0,657.0 C357.3,664.2 357.1,663.2 355.0,672.0 C352.9,680.8 352.7,680.9 353.0,690.0 C353.3,699.1 354.1,697.7 356.0,706.0 C357.9,714.3 357.3,713.8 360.0,721.0 C362.7,728.2 362.8,727.4 366.0,733.0 C369.2,738.6 368.0,736.7 372.0,742.0 C376.0,747.3 375.9,747.4 381.0,753.0 C386.1,758.6 385.1,758.5 391.0,763.0 C396.9,767.5 396.3,767.1 403.0,770.0 C409.7,772.9 409.3,773.5 416.0,774.0 C422.7,774.5 422.1,773.9 428.0,772.0 C433.9,770.1 432.1,770.7 438.0,767.0 C443.9,763.3 443.9,763.1 450.0,758.0 C456.1,752.9 455.9,753.6 461.0,748.0 C466.1,742.4 465.3,743.1 469.0,737.0 C472.7,730.9 472.1,731.7 475.0,725.0 C477.9,718.3 477.9,719.2 480.0,712.0 C482.1,704.8 481.7,706.5 483.0,698.0 C484.3,689.5 484.7,688.5 485.0,680.0 C485.3,671.5 487.5,670.5 484.0,666.0 C480.5,661.5 477.9,664.6 472.0,663.0 C466.1,661.4 467.3,662.1 462.0,660.0 C456.7,657.9 456.5,657.7 452.0,655.0 C447.5,652.3 448.2,652.9 445.0,650.0 C441.8,647.1 442.4,647.7 440.0,644.0 C437.6,640.3 437.9,640.5 436.0,636.0 C434.1,631.5 434.6,631.8 433.0,627.0 C431.4,622.2 432.1,622.8 430.0,618.0 C427.9,613.2 427.9,612.7 425.0,609.0 C422.1,605.3 423.0,606.0 419.0,604.0 C415.0,602.0 415.6,601.8 410.0,601.5Z" fill="#dbad95" />
<path d="M392.0,622.0 C398.4,609.7 402.4,611.9 412.0,614.0 C421.6,616.1 421.6,619.9 428.0,630.0 C434.4,640.1 433.9,636.0 436.0,652.0 C438.1,668.0 437.1,669.2 436.0,690.0 C434.9,710.8 435.2,713.5 432.0,730.0 C428.8,746.5 430.4,745.1 424.0,752.0 C417.6,758.9 415.5,759.2 408.0,756.0 C400.5,752.8 400.3,754.9 396.0,740.0 C391.7,725.1 394.1,721.3 392.0,700.0 C389.9,678.7 388.0,680.8 388.0,660.0 C388.0,639.2 385.6,634.3 392.0,622.0Z" fill="#e7c3ad" opacity="0.9" filter="url(#b4)"/>
<path d="M354.0,690.0 C352.9,698.0 354.7,709.1 360.0,724.0 C365.3,738.9 365.5,735.3 374.0,746.0 C382.5,756.7 389.3,765.6 392.0,764.0 C394.7,762.4 389.3,752.8 384.0,740.0 C378.7,727.2 377.3,728.3 372.0,716.0 C366.7,703.7 368.8,700.9 364.0,694.0 C359.2,687.1 355.1,682.0 354.0,690.0Z" fill="#bd8a70" opacity="0.75" filter="url(#b2)"/>
<path d="M484.0,690.0 C485.6,693.7 483.3,707.1 478.0,722.0 C472.7,736.9 472.0,735.9 464.0,746.0 C456.0,756.1 448.5,763.2 448.0,760.0 C447.5,756.8 455.6,747.9 462.0,734.0 C468.4,720.1 466.1,719.7 472.0,708.0 C477.9,696.3 482.4,686.3 484.0,690.0Z" fill="#c9957b" opacity="0.6" filter="url(#b2)"/>
<path d="M384.0,620.0 C389.9,612.0 389.7,611.1 394.0,610.0 C398.3,608.9 402.7,606.9 400.0,616.0 C397.3,625.1 393.1,630.1 384.0,644.0 C374.9,657.9 372.4,663.2 366.0,668.0 C359.6,672.8 358.4,669.5 360.0,662.0 C361.6,654.5 365.6,651.2 372.0,640.0 C378.4,628.8 378.1,628.0 384.0,620.0Z" fill="#c99a82" opacity="0.6" filter="url(#b2)"/>
<path d="M354.0,662.0 C358.3,658.3 361.3,658.5 372.0,658.0 C382.7,657.5 385.5,657.3 394.0,660.0 C402.5,662.7 403.5,664.8 404.0,668.0 C404.5,671.2 403.5,670.9 396.0,672.0 C388.5,673.1 386.7,672.0 376.0,672.0 C365.3,672.0 361.9,674.7 356.0,672.0 C350.1,669.3 349.7,665.7 354.0,662.0Z" fill="#d3a233" opacity="0.95"/>
<path d="M430.0,664.0 C434.3,660.5 438.8,659.8 450.0,659.0 C461.2,658.2 462.9,658.6 472.0,661.0 C481.1,663.4 482.4,665.1 484.0,668.0 C485.6,670.9 485.5,670.9 478.0,672.0 C470.5,673.1 467.7,672.0 456.0,672.0 C444.3,672.0 440.9,674.1 434.0,672.0 C427.1,669.9 425.7,667.5 430.0,664.0Z" fill="#d3a233" opacity="0.95"/>
<path d="M367.0,652.0 C371.3,652.0 371.0,651.0 380.0,652.0 C389.0,653.0 385.0,652.3 394.0,655.0 C403.0,657.7 402.7,658.3 407.0,660.0" fill="none" stroke="#3a2924" stroke-width="2.6" stroke-linecap="round" stroke-linejoin="round" />
<path d="M428.0,658.0 C431.3,657.3 430.3,657.0 438.0,656.0 C445.7,655.0 446.7,655.3 451.0,655.0" fill="none" stroke="#3a2924" stroke-width="2.4" stroke-linecap="round" stroke-linejoin="round" />
<path d="M373.0,666.0 C374.6,663.9 376.9,662.5 382.0,662.0 C387.1,661.5 388.0,662.1 392.0,664.0 C396.0,665.9 398.6,667.1 397.0,669.0 C395.4,670.9 391.6,670.7 386.0,671.0 C380.4,671.3 379.5,671.3 376.0,670.0 C372.5,668.7 371.4,668.1 373.0,666.0Z" fill="#2a1c18" />
<path d="M434.0,665.0 C435.6,662.9 437.7,661.8 443.0,661.0 C448.3,660.2 449.7,660.4 454.0,662.0 C458.3,663.6 460.6,664.9 459.0,667.0 C457.4,669.1 453.9,669.5 448.0,670.0 C442.1,670.5 440.7,670.3 437.0,669.0 C433.3,667.7 432.4,667.1 434.0,665.0Z" fill="#2a1c18" />
<path d="M411.0,690.0 C406.5,695.3 409.4,702.0 407.0,710.0 C404.6,718.0 401.5,715.5 402.0,720.0 C402.5,724.5 404.2,725.1 409.0,727.0 C413.8,728.9 414.4,728.3 420.0,727.0 C425.6,725.7 428.1,727.1 430.0,722.0 C431.9,716.9 428.6,716.5 427.0,708.0 C425.4,699.5 428.3,694.8 424.0,690.0 C419.7,685.2 415.5,684.7 411.0,690.0Z" fill="#eccdb9" filter="url(#b1)"/>
<path d="M404.0,721.0 C403.5,719.9 406.3,723.7 410.0,725.0 C413.7,726.3 413.2,726.8 418.0,726.0 C422.8,725.2 426.9,721.5 428.0,722.0 C429.1,722.5 426.3,726.1 422.0,728.0 C417.7,729.9 416.8,730.9 412.0,729.0 C407.2,727.1 404.5,722.1 404.0,721.0Z" fill="#a9705f" />
<path d="M392.0,737.0 C393.9,734.3 397.1,732.8 403.0,732.0 C408.9,731.2 407.9,734.0 414.0,734.0 C420.1,734.0 419.1,731.5 426.0,732.0 C432.9,732.5 438.4,733.1 440.0,736.0 C441.6,738.9 437.9,740.1 432.0,743.0 C426.1,745.9 425.5,746.2 418.0,747.0 C410.5,747.8 409.9,747.3 404.0,746.0 C398.1,744.7 399.2,744.4 396.0,742.0 C392.8,739.6 390.1,739.7 392.0,737.0Z" fill="#d08b84" />
<path d="M392.0,737.0 C396.3,737.3 396.7,737.7 405.0,738.0 C413.3,738.3 409.0,738.3 417.0,738.0 C425.0,737.7 421.3,737.7 429.0,737.0 C436.7,736.3 436.3,736.3 440.0,736.0" fill="none" stroke="#9c5d58" stroke-width="1.3" stroke-linecap="round" stroke-linejoin="round" />
<path d="M398.0,752.0 C401.7,749.9 407.3,756.5 418.0,756.0 C428.7,755.5 434.8,747.9 438.0,750.0 C441.2,752.1 435.9,759.2 430.0,764.0 C424.1,768.8 422.9,768.0 416.0,768.0 C409.1,768.0 408.8,768.3 404.0,764.0 C399.2,759.7 394.3,754.1 398.0,752.0Z" fill="#e7c3ad" opacity="0.7" filter="url(#b2)"/>
<path d="M350.0,676.0 C353.5,670.7 367.0,674.8 376.0,675.0 C385.0,675.2 399.5,673.5 404.0,677.0 C408.5,680.5 404.0,690.3 403.0,696.0 C402.0,701.7 401.2,707.7 398.0,711.0 C394.8,714.3 389.3,715.3 384.0,716.0 C378.7,716.7 370.8,716.5 366.0,715.0 C361.2,713.5 357.7,713.5 355.0,707.0 C352.3,700.5 346.5,681.3 350.0,676.0Z" fill="url(#lensG)" />
<path d="M426.0,676.0 C429.8,670.8 444.8,674.3 454.0,674.0 C463.2,673.7 476.7,670.7 481.0,674.0 C485.3,677.3 481.0,688.3 480.0,694.0 C479.0,699.7 478.3,704.7 475.0,708.0 C471.7,711.3 465.5,713.2 460.0,714.0 C454.5,714.8 446.8,714.5 442.0,713.0 C437.2,711.5 433.7,711.2 431.0,705.0 C428.3,698.8 422.2,681.2 426.0,676.0Z" fill="url(#lensG)" />
<path d="M384.0,684.0 C388.3,679.2 393.7,678.3 398.0,682.0 C402.3,685.7 401.6,691.1 400.0,698.0 C398.4,704.9 396.8,707.5 392.0,708.0 C387.2,708.5 384.1,706.4 382.0,700.0 C379.9,693.6 379.7,688.8 384.0,684.0Z" fill="#f6e6a8" opacity="0.75" filter="url(#b1)"/>
<path d="M446.0,680.0 C451.9,676.3 460.1,674.8 466.0,678.0 C471.9,681.2 470.7,686.1 468.0,692.0 C465.3,697.9 462.4,700.0 456.0,700.0 C449.6,700.0 446.7,697.3 444.0,692.0 C441.3,686.7 440.1,683.7 446.0,680.0Z" fill="#f6e6a8" opacity="0.75" filter="url(#b1)"/>
<path d="M356.0,692.0 C359.5,690.4 363.6,694.7 370.0,700.0 C376.4,705.3 381.1,708.5 380.0,712.0 C378.9,715.5 372.1,714.6 366.0,713.0 C359.9,711.4 359.7,711.6 357.0,706.0 C354.3,700.4 352.5,693.6 356.0,692.0Z" fill="#cf9626" opacity="0.7" filter="url(#b1)"/>
<path d="M432.0,694.0 C435.2,693.5 438.0,697.2 446.0,702.0 C454.0,706.8 462.5,709.6 462.0,712.0 C461.5,714.4 451.5,713.1 444.0,711.0 C436.5,708.9 437.2,708.5 434.0,704.0 C430.8,699.5 428.8,694.5 432.0,694.0Z" fill="#cf9626" opacity="0.7" filter="url(#b1)"/>
<path d="M425.0,678.0 C425.7,684.0 424.7,686.0 427.0,696.0 C429.3,706.0 426.7,701.7 432.0,708.0 C437.3,714.3 433.7,712.3 443.0,715.0 C452.3,717.7 449.7,717.3 460.0,716.0 C470.3,714.7 467.0,717.0 474.0,711.0 C481.0,705.0 477.7,709.7 481.0,698.0 C484.3,686.3 483.0,683.3 484.0,676.0" fill="none" stroke="#d9d3d0" stroke-width="4" stroke-linecap="round" stroke-linejoin="round" />
<path d="M429.0,714.0 C434.0,715.7 433.3,717.3 444.0,719.0 C454.7,720.7 450.3,720.7 461.0,719.0 C471.7,717.3 468.3,720.3 476.0,714.0 C483.7,707.7 480.3,712.7 484.0,700.0 C487.7,687.3 486.0,684.0 487.0,676.0" fill="none" stroke="#4a3a3e" stroke-width="1.3" stroke-linecap="round" stroke-linejoin="round" />
<path d="M428.0,674.0 C436.0,673.3 436.0,673.0 452.0,672.0 C468.0,671.0 464.3,671.0 476.0,671.0 C487.7,671.0 483.3,671.7 487.0,672.0" fill="none" stroke="#9d74a6" stroke-width="4.5" stroke-linecap="round" stroke-linejoin="round" />
<path d="M349.0,676.0 C349.7,682.7 348.7,684.7 351.0,696.0 C353.3,707.3 350.7,702.7 356.0,710.0 C361.3,717.3 357.3,715.0 367.0,718.0 C376.7,721.0 374.3,720.3 385.0,719.0 C395.7,717.7 392.3,721.0 399.0,714.0 C405.7,707.0 402.7,710.0 405.0,698.0 C407.3,686.0 405.7,684.7 406.0,678.0" fill="none" stroke="#35262a" stroke-width="3.6" stroke-linecap="round" stroke-linejoin="round" />
<path d="M355.0,709.0 C359.3,711.3 358.3,713.3 368.0,716.0 C377.7,718.7 378.7,716.7 384.0,717.0" fill="none" stroke="#d9d3d0" stroke-width="1.2" stroke-linecap="round" stroke-linejoin="round" />
<path d="M342.0,672.0 C345.3,671.8 339.3,671.5 352.0,671.5 C364.7,671.5 362.3,670.8 380.0,672.0 C397.7,673.2 393.0,672.3 405.0,675.0 C417.0,677.7 409.3,680.0 416.0,680.0 C422.7,680.0 422.0,676.7 425.0,675.0" fill="none" stroke="#35262a" stroke-width="5" stroke-linecap="round" stroke-linejoin="round" />
<path d="M425.0,675.0 L440.0,672.0" fill="none" stroke="#5a4450" stroke-width="4.5" stroke-linecap="round" stroke-linejoin="round" />
<path d="M331.0,826.0 C330.0,813.0 327.2,808.7 328.0,802.0 C328.8,795.3 332.3,790.3 336.0,786.0 C339.7,781.7 344.0,778.5 350.0,776.0 C356.0,773.5 364.3,771.5 372.0,771.0 C379.7,770.5 388.0,773.0 396.0,773.0 C404.0,773.0 411.7,771.8 420.0,771.0 C428.3,770.2 437.7,768.0 446.0,768.0 C454.3,768.0 462.7,769.2 470.0,771.0 C477.3,772.8 484.8,775.2 490.0,779.0 C495.2,782.8 498.8,786.2 501.0,794.0 C503.2,801.8 503.2,811.7 503.0,826.0 C502.8,840.3 528.2,871.0 500.0,880.0 C471.8,889.0 362.2,889.0 334.0,880.0 C305.8,871.0 332.0,839.0 331.0,826.0Z" fill="#2c211c" />
<path d="M350.0,804.0 C355.3,793.3 361.3,791.9 380.0,786.0 C398.7,780.1 398.7,782.0 420.0,782.0 C441.3,782.0 441.9,780.7 460.0,786.0 C478.1,791.3 482.7,791.3 488.0,802.0 C493.3,812.7 514.1,819.6 480.0,826.0 C445.9,832.4 394.7,831.9 360.0,826.0 C325.3,820.1 344.7,814.7 350.0,804.0Z" fill="#54402f" opacity="0.7" filter="url(#b2)"/>
<path d="M352,818 Q356.0,807.0 368,796" stroke="#7b6652" stroke-width="1.6" fill="none" opacity="0.7"/>
<path d="M366,822 Q372.0,808.0 386,794" stroke="#7b6652" stroke-width="1.6" fill="none" opacity="0.7"/>
<path d="M384,822 Q388.0,807.0 400,792" stroke="#7b6652" stroke-width="1.6" fill="none" opacity="0.7"/>
<path d="M402,822 Q406.0,806.0 418,790" stroke="#7b6652" stroke-width="1.6" fill="none" opacity="0.7"/>
<path d="M420,822 Q423.0,807.0 434,792" stroke="#7b6652" stroke-width="1.6" fill="none" opacity="0.7"/>
<path d="M438,822 Q440.0,808.0 450,794" stroke="#7b6652" stroke-width="1.6" fill="none" opacity="0.7"/>
<path d="M456,822 Q457.0,809.0 466,796" stroke="#7b6652" stroke-width="1.6" fill="none" opacity="0.7"/>
<path d="M472,822 Q473.0,811.0 482,800" stroke="#7b6652" stroke-width="1.6" fill="none" opacity="0.7"/>
<path d="M344,806 Q346.0,798.0 356,790" stroke="#7b6652" stroke-width="1.6" fill="none" opacity="0.7"/>
<path d="M488,816 Q487.0,809.0 494,802" stroke="#7b6652" stroke-width="1.6" fill="none" opacity="0.7"/>
<path d="M360,820 Q371.0,810.0 374,800" stroke="#1a1310" stroke-width="2" fill="none" opacity="0.7"/>
<path d="M394,820 Q405.0,809.0 408,798" stroke="#1a1310" stroke-width="2" fill="none" opacity="0.7"/>
<path d="M428,820 Q438.0,810.0 440,800" stroke="#1a1310" stroke-width="2" fill="none" opacity="0.7"/>
<path d="M462,820 Q471.0,811.0 472,802" stroke="#1a1310" stroke-width="2" fill="none" opacity="0.7"/>
</g>
</svg>

<svg style="left:520px;top:285px" width="145" height="45" viewBox="520 285 145 45" fill="none">
<rect x="526.5" y="290.5" width="130" height="32" stroke="#ffffff" stroke-width="1"/>
<rect x="526.5" y="290.5" width="130" height="32" stroke="#2b2b2b" stroke-width="1" stroke-dasharray="3 3"/>
<path d="M589.5,291 V322" stroke="#2b2b2b" stroke-width="1"/>
<g fill="#ffffff" stroke="#3a3a3a" stroke-width="1">
<rect x="524.5" y="288.5" width="4" height="4"/><rect x="590.5" y="288.5" width="4" height="4"/><rect x="654.5" y="288.5" width="4" height="4"/>
<rect x="524.5" y="305.5" width="4" height="4"/><rect x="654.5" y="305.5" width="4" height="4"/>
<rect x="524.5" y="320.5" width="4" height="4"/><rect x="590.5" y="320.5" width="4" height="4"/><rect x="654.5" y="320.5" width="4" height="4"/>
</g>
</svg>
<div class="abs" style="left:530px;top:297px;font-size:14.6px;line-height:20px;font-weight:bold;color:#000;white-space:nowrap;letter-spacing:0px">我是水印</div>

<div id="ttb" class="abs" style="left:270px;top:191px;width:734px;height:49px;background:#f9f9f9;border:1px solid #e9e9e9;border-top-color:#efefef;border-radius:8px;box-shadow:0 2px 5px rgba(0,0,0,0.09)"></div>
<div class="abs" style="left:278px;top:200px;width:189px;height:31px;background:#fcfcfc;border:1px solid #e2e2e2;border-bottom-color:#d0d0d0;border-radius:4px"></div>
<div class="abs" style="left:290px;top:206px;font-size:14px;line-height:20px;color:#1b1b1b;white-space:nowrap">阿里巴巴普惠体 R</div>
<div class="abs" style="left:476px;top:200px;width:71px;height:31px;background:#fcfcfc;border:1px solid #e2e2e2;border-bottom-color:#d0d0d0;border-radius:4px"></div>
<div class="abs" style="left:488px;top:206px;font-size:14px;line-height:20px;color:#1b1b1b;letter-spacing:-1px">11</div>
<div class="abs" style="left:569px;top:200px;width:32px;height:32px;background:#efefef;border:1px solid #2d5f7a;border-radius:5px"></div>
<div class="abs" style="left:742px;top:200px;width:32px;height:32px;background:#efefef;border:1px solid #2d5f7a;border-radius:5px"></div>
<div class="abs" style="left:875px;top:206px;width:20px;height:20px;background:#f3f3f3;border:1px solid #8c8c8c;border-radius:4px"></div>
<div class="abs" style="left:903px;top:206px;font-size:14px;line-height:20px;color:#1b1b1b;white-space:nowrap">背景填充</div>
<svg style="left:270px;top:192px" width="734" height="48" viewBox="270 192 734 48" fill="none" stroke-linecap="round" stroke-linejoin="round">
<path d="M443.6,214 L447.8,218 L452,214" stroke="#5a5a5a" stroke-width="1.1"/>
<path d="M524,214 L528.2,218 L532.4,214" stroke="#5a5a5a" stroke-width="1.1"/>
<path d="M558.5,201 V231 M731.5,201 V231 M864.5,201 V231" stroke="#e3e3e3" stroke-width="1"/>
<!-- Bold -->
<text transform="translate(584.9,222.7) scale(0.86,1)" font-family="Liberation Sans, sans-serif" font-weight="bold" font-size="18.6" text-anchor="middle" fill="#1b1b1b" stroke="none">B</text>
<!-- Italic -->
<text x="624.4" y="222.3" font-family="Liberation Serif, serif" font-style="italic" font-size="19.4" text-anchor="middle" fill="#2b2b2b" stroke="none">I</text>
<!-- Underline -->
<text x="664.9" y="220.2" font-family="Liberation Sans, sans-serif" font-size="15.4" text-anchor="middle" fill="#2b2b2b" stroke="none">U</text>
<path d="M659.4,222.8 H670.4" stroke="#2b2b2b" stroke-width="1.1"/>
<!-- Strikethrough -->
<text x="705" y="222.4" font-family="Liberation Sans, sans-serif" font-size="18.4" text-anchor="middle" fill="#2b2b2b" stroke="none">S</text>
<path d="M698.4,215.8 H711.6" stroke="#2b2b2b" stroke-width="1.1"/>
<!-- align left / center / right -->
<path d="M750.4,211 H762.6 M750.4,215.6 H766 M750.4,220.2 H759.4" stroke="#1b1b1b" stroke-width="1.1"/>
<path d="M790,211 H805.4 M792.6,215.6 H803 M795,220.2 H801" stroke="#2b2b2b" stroke-width="1.1"/>
<path d="M834,211 H846 M830.2,215.6 H846 M838,220.2 H846" stroke="#2b2b2b" stroke-width="1.1"/>
</svg>


<!-- STATUS BAR -->
<div id="status"></div>
<div class="stsep" style="left:140px"></div>
<div class="stsep" style="left:274px"></div>
<div class="stsep" style="left:410px"></div>
<div class="st" style="left:172px">135 × 37像素</div>
<div class="st" style="left:309px">765 × 956像素</div>
<div class="st" style="left:445px;letter-spacing:-0.5px">大小: 153.1KB</div>
<div class="st" style="left:1023px;letter-spacing:-0.7px">100%</div>
<svg style="left:0;top:192px" width="1271" height="665" viewBox="0 192 1271 665" fill="none" stroke-linecap="round" stroke-linejoin="round">
<!-- scrollbar arrows -->
<path d="M1258.2,203.4 L1262.2,198.6 L1266.2,203.4 Z" fill="#8d8d8d" stroke="#8d8d8d" stroke-width="0.8"/>
<path d="M1258.2,813.8 L1262.2,818.4 L1266.2,813.8 Z" fill="#8d8d8d" stroke="#8d8d8d" stroke-width="0.8"/>
<!-- canvas resize handle -->
<rect x="806.5" y="708.5" width="4" height="4" fill="#ffffff" stroke="#4a4a4a" stroke-width="1"/>
<!-- cursor -->
<path d="M19.6,835.2 V846.6 L22.6,843.8 H26.8 Z" stroke="#2b2b2b" stroke-width="1.1"/>
<!-- select icon -->
<rect x="153.4" y="835.4" width="11" height="11" rx="1.4" stroke="#3a3a3a" stroke-width="1.1" stroke-dasharray="2.6 1.8"/>
<!-- canvas size icon -->
<path d="M291.2,835 V846.6 M299.4,835 V846.6 M289.8,836.6 H300.8 M289.8,845 H300.8" stroke="#2b2b2b" stroke-width="1.1"/>
<!-- save icon -->
<g stroke="#4a4a4a" stroke-width="1">
<path d="M427,836 H433 L435.4,838.4 V845 C435.4,845.6 435,846 434.4,846 H427 C426.4,846 426,845.6 426,845 V837 C426,836.4 426.4,836 427,836Z"/>
<path d="M428.2,836.2 V838.8 H432.6 V836.2 M428,846 V842.6 C428,842.2 428.2,842 428.6,842 H432.8 C433.2,842 433.4,842.2 433.4,842.6 V846"/>
</g>
<!-- zoom controls -->
<path d="M1074.4,840.6 H1085" stroke="#2b2b2b" stroke-width="1.1"/>
<path d="M1244,840.6 H1255 M1249.5,835 V846.2" stroke="#2b2b2b" stroke-width="1.1"/>
<path d="M1102,840.8 H1228" stroke="#8a8a8a" stroke-width="4"/>
<path d="M1102,840.8 H1150" stroke="#1e6a8c" stroke-width="4"/>
<circle cx="1150" cy="841" r="9" fill="#ffffff" stroke="#e2e8ea" stroke-width="0.8"/>
<circle cx="1150" cy="841" r="5.2" fill="#1e6a8c"/>
</svg>

</body>
</html>
